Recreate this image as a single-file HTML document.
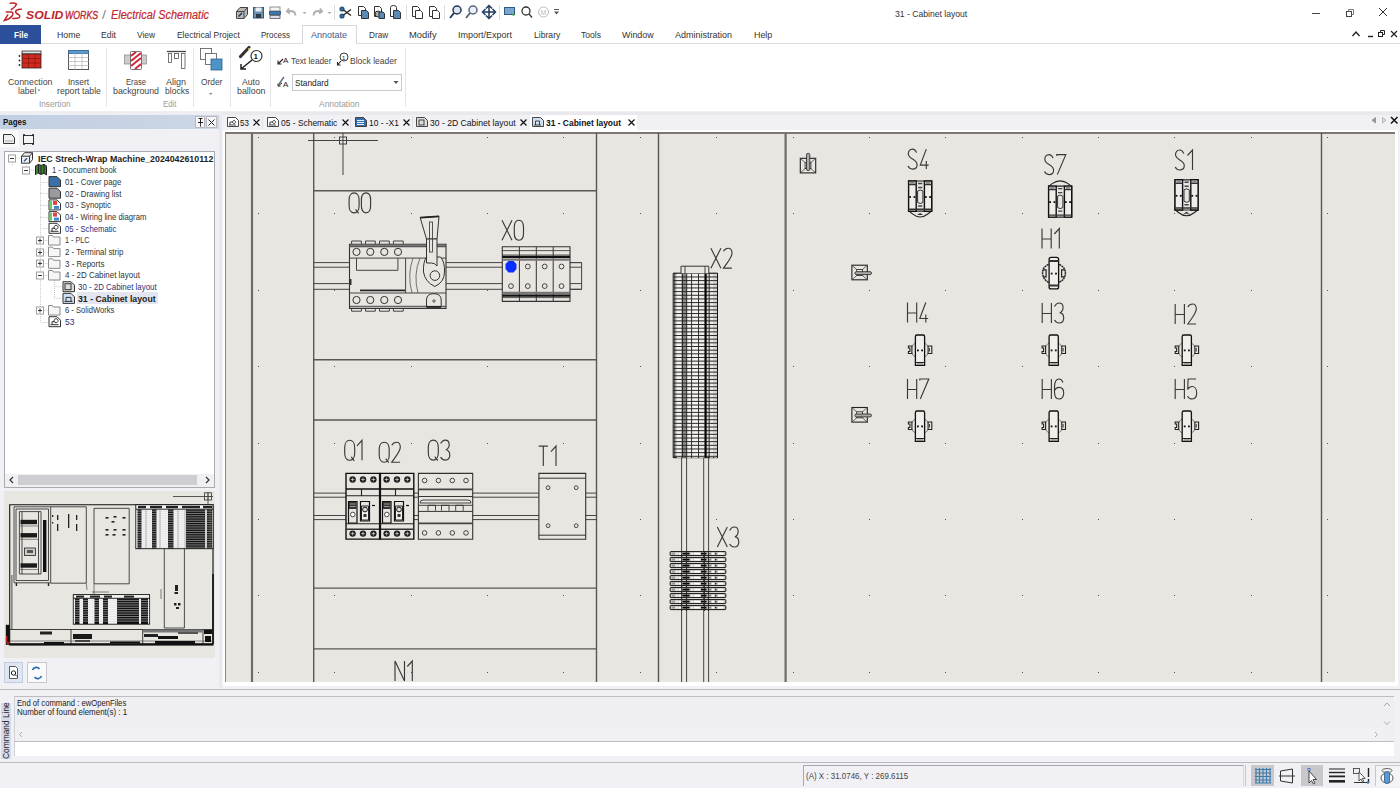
<!DOCTYPE html>
<html><head><meta charset="utf-8">
<style>
*{margin:0;padding:0;box-sizing:border-box}
html,body{width:1400px;height:788px;overflow:hidden;background:#f1f0f4;font-family:"Liberation Sans",sans-serif;color:#333;position:relative}
.a{position:absolute}
.t{position:absolute;white-space:nowrap;transform-origin:0 0}
svg{position:absolute;overflow:visible}
</style></head><body>

<div class="a" style="left:0px;top:0px;width:1400px;height:25px;background:#ffffff"></div>
<svg style="left:0;top:0" width="30" height="25" viewBox="0 0 30 25">
<g fill="none" stroke="#c1272d" stroke-width="1.5" stroke-linecap="round">
<path d="M10.3 3.3 Q14.5 2.6 16.5 4.2 Q15.5 7 11.3 9.5"/>
<path d="M6.2 12 H11.2 Q14 12.5 12.3 15.8 Q9.5 19.5 4.2 20.6 L7.8 14.8"/>
<path d="M21.3 9.3 Q16.5 9 15.7 11.3 Q15.3 13 18 14.2 Q20.8 15.8 19.2 17.6 Q17.5 18.6 12.8 18.5"/>
</g></svg>
<div class="t" style="left:26.10px;top:9.60px;font-size:11.2px;line-height:11.2px;color:#be262c;font-weight:bold;font-style:italic;transform:scaleX(1.0928);">SOLID</div>
<div class="t" style="left:64.50px;top:9.60px;font-size:11.2px;line-height:11.2px;color:#c1272d;font-weight:normal;font-style:italic;transform:scaleX(0.7846);-webkit-text-stroke:0.35px #c1272d;">WORKS</div>
<div class="t" style="left:102.00px;top:8.92px;font-size:12px;line-height:12px;color:#888;font-weight:normal;font-style:normal;transform:scaleX(1.1999);">/</div>
<div class="t" style="left:110.60px;top:8.92px;font-size:12px;line-height:12px;color:#c1272d;font-weight:normal;font-style:italic;transform:scaleX(0.9071);-webkit-text-stroke:0.2px #c1272d;">Electrical Schematic</div>
<div class="t" style="left:895.00px;top:9.65px;font-size:8.4px;line-height:8.4px;color:#333;font-weight:normal;font-style:normal;transform:scaleX(1.0268);">31 - Cabinet layout</div>
<svg style="left:0;top:0" width="1400" height="25">
<g stroke="#444" stroke-width="1" fill="none">
<line x1="1312" y1="13.5" x2="1320" y2="13.5"/>
<rect x="1346.5" y="11.5" width="5" height="5"/><path d="M1348.5 11.5 V9.5 H1353.5 V14.5 H1351.5" stroke="#777"/>
<path d="M1379 8 L1387 16 M1387 8 L1379 16" stroke="#333"/>
</g></svg>
<svg style="left:0;top:0" width="600" height="25">
<path d="M236.5 11.5 L240 7.5 H247.5 V14.5 L244 18.5 H236.5 Z" fill="#b8b8b8" stroke="#444" stroke-width="1"/>
<path d="M236.5 11.5 H244 V18.5 M244 11.5 L247.5 7.5" fill="none" stroke="#444" stroke-width="1"/>
<path d="M238.5 16.5 L242 13" stroke="#1e3a5a" stroke-width="1.6"/>
<rect x="253.5" y="7.5" width="10" height="10.5" fill="#6f8fae" stroke="#3d5670" stroke-width="1"/>
<rect x="255.5" y="7.5" width="6" height="4" fill="#e8eef4"/><rect x="256" y="14" width="5" height="4" fill="#2a3a4a"/>
<rect x="270" y="7" width="10" height="4" fill="#f4f4f4" stroke="#777" stroke-width="0.8"/>
<rect x="269.5" y="11.5" width="11" height="3" fill="#3a78b0" stroke="#2a4f80" stroke-width="0.8"/>
<rect x="270" y="15.5" width="10" height="3" fill="#dde" stroke="#555" stroke-width="0.8"/>
<g stroke="#b0b0b0" stroke-width="2" fill="none"><path d="M289 8.5 L287 11.5 L290 13.5 M287.8 11.5 Q295 9.5 295.5 15.5"/><path d="M320 8.5 L322 11.5 L319 13.5 M321.2 11.5 Q314 9.5 313.5 15.5"/></g>
<g fill="#aaa"><path d="M302.5 12 h4 l-2 2z"/><path d="M327.5 12 h4 l-2 2z"/></g>
<g stroke="#ddd"><line x1="334.5" y1="5" x2="334.5" y2="20"/><line x1="406.5" y1="5" x2="406.5" y2="20"/><line x1="444.5" y1="5" x2="444.5" y2="20"/><line x1="499.5" y1="5" x2="499.5" y2="20"/></g>
<g stroke="#2a5a85" stroke-width="1.6" fill="#3a6a95">
<circle cx="342" cy="9" r="1.8"/><circle cx="342" cy="16" r="1.8"/></g>
<path d="M343.5 10 L351 15.5 M343.5 15 L351 9.5" stroke="#222" stroke-width="1.3"/>
<g stroke="#333" stroke-width="1" fill="#fff">
<path d="M358.5 6.5 h5 l2 2 v7 h-7z"/><path d="M361.5 10.5 h5 l2 2 v6 h-7z" fill="#5a8ab5"/>
<path d="M374.5 6.5 h5 l2 2 v8 h-7z"/><circle cx="378" cy="14" r="3" fill="#aaa"/><path d="M379 12 h4 l1.5 1.5 v5 h-5.5z" fill="#5a8ab5"/>
<path d="M390.5 7.5 q0 -2 3 -2 q3 0 3 2 v9 h-6z"/><path d="M393.5 10.5 h5 l2 2 v6 h-7z" fill="#5a8ab5"/>
<path d="M412.5 6.5 h5 l2 2 v8 h-7z"/><path d="M415.5 10.5 h5 l2 2 v6 h-7z"/>
<path d="M429.5 6.5 h5 l2 2 v8 h-7z"/><path d="M432.5 10.5 h5 l2 2 v6 h-7z"/>
</g>
<g stroke="#1f3a5c" stroke-width="1.5" fill="none">
<circle cx="457" cy="10" r="4" fill="#dde6ee"/><path d="M454 13 L450 18" stroke-width="2"/>
<circle cx="473" cy="10" r="4" stroke="#567" fill="#eef"/><path d="M470 13 L466 18" stroke="#567" stroke-width="2"/>
<path d="M489 6 L489 18 M483 12 L495 12"/><path d="M486 8.5 L489 5.5 L492 8.5 M486 15.5 L489 18.5 L492 15.5 M485.5 9 L482.5 12 L485.5 15 M492.5 9 L495.5 12 L492.5 15"/>
</g>
<g stroke="#2c5a8a" stroke-width="1" fill="#7aa6cf"><rect x="504.5" y="7.5" width="10" height="7"/></g>
<path d="M511 13 l4 2 l-2 1z" fill="#3a3"/>
<g stroke="#333" stroke-width="1.3" fill="none"><circle cx="526" cy="11" r="4"/><path d="M529 14 L532 17.5"/></g>
<g stroke="#bbb" stroke-width="1" fill="none"><circle cx="543.5" cy="12" r="5"/></g>
<text x="540.5" y="14.5" font-size="7" fill="#bbb" font-family="Liberation Sans">M</text>
<g stroke="#555" fill="#555"><line x1="554" y1="9.5" x2="559" y2="9.5"/><path d="M554 11.5 h5 l-2.5 3z" stroke="none"/></g>
</svg>
<div class="a" style="left:0px;top:25px;width:1400px;height:19px;background:#ffffff"></div>
<div class="a" style="left:0px;top:43px;width:1400px;height:1px;background:#dadadf"></div>
<div class="a" style="left:0px;top:25px;width:41px;height:19px;background:#2c4f9c"></div>
<div class="t" style="left:13.50px;top:31.36px;font-size:9px;line-height:9px;color:#ffffff;font-weight:bold;font-style:normal;transform:scaleX(0.9030);">File</div>
<div class="a" style="left:302px;top:25px;width:55px;height:19px;background:#fff;border:1px solid #d6d6dc;border-bottom:none"></div>
<div class="a" style="left:303px;top:43px;width:53px;height:1px;background:#fff"></div>
<div class="t" style="left:56.60px;top:31.06px;font-size:9px;line-height:9px;color:#333;font-weight:normal;font-style:normal;transform:scaleX(0.9747);">Home</div>
<div class="t" style="left:101.00px;top:31.06px;font-size:9px;line-height:9px;color:#333;font-weight:normal;font-style:normal;transform:scaleX(0.9672);">Edit</div>
<div class="t" style="left:137.00px;top:31.06px;font-size:9px;line-height:9px;color:#333;font-weight:normal;font-style:normal;transform:scaleX(0.9304);">View</div>
<div class="t" style="left:176.60px;top:31.06px;font-size:9px;line-height:9px;color:#333;font-weight:normal;font-style:normal;transform:scaleX(0.9370);">Electrical Project</div>
<div class="t" style="left:261.00px;top:31.06px;font-size:9px;line-height:9px;color:#333;font-weight:normal;font-style:normal;transform:scaleX(0.8920);">Process</div>
<div class="t" style="left:311.00px;top:31.06px;font-size:9px;line-height:9px;color:#3d5a8c;font-weight:normal;font-style:normal;transform:scaleX(0.9991);">Annotate</div>
<div class="t" style="left:368.60px;top:31.06px;font-size:9px;line-height:9px;color:#333;font-weight:normal;font-style:normal;transform:scaleX(0.9094);">Draw</div>
<div class="t" style="left:409.00px;top:31.06px;font-size:9px;line-height:9px;color:#333;font-weight:normal;font-style:normal;transform:scaleX(1.0412);">Modify</div>
<div class="t" style="left:458.00px;top:31.06px;font-size:9px;line-height:9px;color:#333;font-weight:normal;font-style:normal;transform:scaleX(0.9996);">Import/Export</div>
<div class="t" style="left:533.70px;top:31.06px;font-size:9px;line-height:9px;color:#333;font-weight:normal;font-style:normal;transform:scaleX(0.9560);">Library</div>
<div class="t" style="left:581.00px;top:31.06px;font-size:9px;line-height:9px;color:#333;font-weight:normal;font-style:normal;transform:scaleX(0.9519);">Tools</div>
<div class="t" style="left:622.00px;top:31.06px;font-size:9px;line-height:9px;color:#333;font-weight:normal;font-style:normal;transform:scaleX(0.9903);">Window</div>
<div class="t" style="left:675.00px;top:31.06px;font-size:9px;line-height:9px;color:#333;font-weight:normal;font-style:normal;transform:scaleX(0.9996);">Administration</div>
<div class="t" style="left:753.70px;top:31.06px;font-size:9px;line-height:9px;color:#333;font-weight:normal;font-style:normal;transform:scaleX(0.9886);">Help</div>
<svg style="left:0;top:25" width="1400" height="19">
<g stroke="#222" fill="none" transform="translate(0 -25)">
<path d="M1352.5 36 L1356 32 L1359.5 36" stroke-width="1.4"/>
<line x1="1368" y1="36.5" x2="1373" y2="36.5" stroke-width="1.4"/>
<rect x="1378.5" y="32.5" width="4" height="4"/><path d="M1380.5 32.5 V30.5 H1384.5 V34.5 H1382.5"/>
<path d="M1391 31 L1397 37 M1397 31 L1391 37" stroke-width="1.2"/>
</g></svg>
<div class="a" style="left:0px;top:44px;width:1400px;height:67px;background:#ffffff"></div>
<div class="a" style="left:0px;top:111px;width:1400px;height:4px;background:#eeedf1"></div>
<div class="a" style="left:106px;top:48px;width:1px;height:59px;background:#e6e6ea"></div>
<div class="a" style="left:193px;top:48px;width:1px;height:59px;background:#e6e6ea"></div>
<div class="a" style="left:230px;top:48px;width:1px;height:59px;background:#e6e6ea"></div>
<div class="a" style="left:270px;top:48px;width:1px;height:59px;background:#e6e6ea"></div>
<div class="a" style="left:405px;top:48px;width:1px;height:59px;background:#e6e6ea"></div>
<div class="t" style="left:7.50px;top:77.87px;font-size:9.2px;line-height:9.2px;color:#444;font-weight:normal;font-style:normal;transform:scaleX(0.9561);">Connection</div>
<div class="t" style="left:17.60px;top:87.27px;font-size:9.2px;line-height:9.2px;color:#444;font-weight:normal;font-style:normal;transform:scaleX(0.9466);">label</div>
<div class="t" style="left:67.70px;top:77.87px;font-size:9.2px;line-height:9.2px;color:#444;font-weight:normal;font-style:normal;transform:scaleX(0.9170);">Insert</div>
<div class="t" style="left:56.70px;top:87.27px;font-size:9.2px;line-height:9.2px;color:#444;font-weight:normal;font-style:normal;transform:scaleX(0.9454);">report table</div>
<div class="t" style="left:39.40px;top:99.97px;font-size:9.2px;line-height:9.2px;color:#9a9a9a;font-weight:normal;font-style:normal;transform:scaleX(0.8955);">Insertion</div>
<div class="t" style="left:126.00px;top:77.87px;font-size:9.2px;line-height:9.2px;color:#444;font-weight:normal;font-style:normal;transform:scaleX(0.8321);">Erase</div>
<div class="t" style="left:112.80px;top:87.27px;font-size:9.2px;line-height:9.2px;color:#444;font-weight:normal;font-style:normal;transform:scaleX(0.9567);">background</div>
<div class="t" style="left:166.30px;top:77.87px;font-size:9.2px;line-height:9.2px;color:#444;font-weight:normal;font-style:normal;transform:scaleX(0.9825);">Align</div>
<div class="t" style="left:164.50px;top:87.27px;font-size:9.2px;line-height:9.2px;color:#444;font-weight:normal;font-style:normal;transform:scaleX(0.9280);">blocks</div>
<div class="t" style="left:163.00px;top:99.97px;font-size:9.2px;line-height:9.2px;color:#9a9a9a;font-weight:normal;font-style:normal;transform:scaleX(0.8389);">Edit</div>
<div class="t" style="left:200.60px;top:77.87px;font-size:9.2px;line-height:9.2px;color:#444;font-weight:normal;font-style:normal;transform:scaleX(0.9100);">Order</div>
<div class="t" style="left:242.30px;top:77.87px;font-size:9.2px;line-height:9.2px;color:#444;font-weight:normal;font-style:normal;transform:scaleX(0.9352);">Auto</div>
<div class="t" style="left:236.60px;top:87.27px;font-size:9.2px;line-height:9.2px;color:#444;font-weight:normal;font-style:normal;transform:scaleX(0.9605);">balloon</div>
<div class="t" style="left:290.90px;top:56.77px;font-size:9.2px;line-height:9.2px;color:#444;font-weight:normal;font-style:normal;transform:scaleX(0.8999);">Text leader</div>
<div class="t" style="left:350.30px;top:56.77px;font-size:9.2px;line-height:9.2px;color:#444;font-weight:normal;font-style:normal;transform:scaleX(0.9244);">Block leader</div>
<div class="t" style="left:319.40px;top:99.97px;font-size:9.2px;line-height:9.2px;color:#9a9a9a;font-weight:normal;font-style:normal;transform:scaleX(0.9229);">Annotation</div>
<div class="a" style="left:292px;top:74px;width:110px;height:17px;background:#fff;border:1px solid #c8c8cc"></div>
<div class="t" style="left:294.90px;top:78.57px;font-size:9.2px;line-height:9.2px;color:#222;font-weight:normal;font-style:normal;transform:scaleX(0.9025);">Standard</div>
<svg style="left:0;top:0" width="420" height="111">
<path d="M37.5 89.5 h3 l-1.5 1.8z" fill="#777"/>
<path d="M209 93 h3.5 l-1.75 2z" fill="#888"/>
<path d="M393.5 81 h5 l-2.5 3z" fill="#555"/>
<!-- connection label icon -->
<rect x="22" y="51" width="19" height="3" fill="#ddd" stroke="#333" stroke-width="0.8"/>
<rect x="22" y="54" width="19" height="14" fill="#d42a1e" stroke="#222" stroke-width="0.8"/>
<path d="M22 58.5 H41 M22 63 H41 M28.5 54 V68 M35 54 V68" stroke="#8a1a12" stroke-width="0.8"/>
<circle cx="19.5" cy="56" r="0.9" fill="#222"/><circle cx="19.5" cy="60.5" r="0.9" fill="#222"/><circle cx="19.5" cy="65" r="0.9" fill="#222"/>
<!-- insert report table -->
<rect x="68.5" y="50.5" width="20" height="19" fill="#fff" stroke="#555" stroke-width="1"/>
<rect x="68.5" y="50.5" width="20" height="3" fill="#5a9ccc" stroke="#3a6a9a" stroke-width="0.8"/>
<path d="M68.5 57.5 H88.5 M68.5 61.5 H88.5 M68.5 65.5 H88.5 M75 53.5 V69.5 M82 53.5 V69.5" stroke="#bbb" stroke-width="0.8"/>
<!-- erase background -->
<rect x="124.5" y="55" width="22" height="9" fill="#ccc" stroke="#777" stroke-width="0.6"/>
<rect x="130.5" y="51.5" width="11" height="18" fill="#fff" stroke="#555" stroke-width="0.8" rx="1"/>
<path d="M131 56 L136 52 M131 61 L141 53 M131 66 L141 58 M135 69 L141 64" stroke="#d0263a" stroke-width="2"/>
<!-- align blocks -->
<path d="M167 51.5 H186" stroke="#444" stroke-width="1.3"/>
<rect x="168.5" y="53.5" width="3" height="9" fill="#fff" stroke="#555" stroke-width="0.8"/>
<rect x="174.5" y="53.5" width="4" height="5" fill="#fff" stroke="#555" stroke-width="0.8"/>
<rect x="181.5" y="53.5" width="3.5" height="15" fill="#fff" stroke="#555" stroke-width="0.8"/>
<!-- order -->
<rect x="200.5" y="48.5" width="11" height="11" fill="#fff" stroke="#555" stroke-width="0.8"/>
<rect x="205.5" y="53.5" width="11" height="11" fill="#fff" stroke="#555" stroke-width="0.8"/>
<rect x="211" y="59" width="11" height="11" fill="#4c94c8" stroke="#2b5f8a" stroke-width="0.8"/>
<!-- auto balloon -->
<circle cx="256.5" cy="56" r="5.5" fill="#fff" stroke="#333" stroke-width="1.2"/>
<text x="253.5" y="59" font-size="8" font-weight="bold" fill="#222" font-family="Liberation Sans">1</text>
<path d="M249 47.5 L240.5 56.5" stroke="#333" stroke-width="3.2" stroke-linecap="round"/>
<path d="M252 60 L241 69 M241 64 V69 H246" stroke="#222" stroke-width="1.5" fill="none"/>
<circle cx="249" cy="49" r="1" fill="#dd3"/>
<!-- text leader -->
<path d="M283 59 L278 64 M278 60.5 V64 H281.5" stroke="#222" stroke-width="1.1" fill="none"/>
<text x="283" y="63" font-size="8" fill="#222" font-family="Liberation Sans">A</text>
<circle cx="344" cy="57" r="4" fill="#fff" stroke="#222" stroke-width="0.9"/>
<text x="342" y="59.5" font-size="6" fill="#222" font-family="Liberation Sans">1</text>
<path d="M341 61 L337.5 65 M337.5 62 V65 H340.5" stroke="#222" stroke-width="1.1" fill="none"/>
<path d="M284 77 L279 84" stroke="#5a6e8c" stroke-width="1.4"/>
<path d="M282 83 L278 86 M278 83.5 V86 H280.5" stroke="#222" stroke-width="1" fill="none"/>
<text x="283" y="87" font-size="8" fill="#222" font-family="Liberation Sans">A</text>
</svg>
<div class="a" style="left:0px;top:115px;width:222px;height:573px;background:#f1f0f4"></div>
<div class="a" style="left:0px;top:115px;width:221px;height:14px;background:linear-gradient(90deg,#c3d0e2 0%,#c8d4e4 70%,#cdd7e6 100%)"></div>
<div class="t" style="left:2.90px;top:117.56px;font-size:9px;line-height:9px;color:#111;font-weight:bold;font-style:normal;transform:scaleX(0.8787);">Pages</div>
<div class="a" style="left:195px;top:116px;width:10px;height:12px;background:#f6f6f8;border:1px solid #b8b8c0"></div>
<div class="a" style="left:206px;top:116px;width:11px;height:12px;background:#f6f6f8;border:1px solid #b8b8c0"></div>
<svg style="left:0;top:0" width="222" height="700">
<g stroke="#222" stroke-width="1" fill="none">
<path d="M198.5 118.5 h4 M200.5 118.5 v6 M198 122.5 h5 M200.5 124.5 v2"/>
<path d="M208.5 119.5 l6 6 M214.5 119.5 l-6 6"/>
</g>
<!-- icons row -->
<rect x="0" y="131" width="19" height="16" fill="#fbfbfc"/>
<path d="M3.5 134.5 h8 l3 3 v6 h-11z" fill="#eee" stroke="#333" stroke-width="1"/>
<rect x="5" y="140" width="8" height="2" fill="#ccc"/>
<rect x="23.5" y="135.5" width="10" height="8" fill="#f4f4f4" stroke="#333" stroke-width="1"/>
<circle cx="24" cy="135" r="1" fill="#222"/><circle cx="33" cy="135" r="1" fill="#222"/><circle cx="24" cy="144" r="1" fill="#222"/><circle cx="33" cy="144" r="1" fill="#222"/>
</svg>
<div class="a" style="left:4px;top:151px;width:211px;height:337px;background:#ffffff;border:1px solid #a9a9b0"></div>
<div class="a" style="left:5px;top:474px;width:209px;height:13px;background:#f0f0f3"></div>
<div class="a" style="left:18px;top:475px;width:179px;height:10px;background:#cdcdd2"></div>
<svg style="left:0;top:0" width="222" height="700">
<path d="M13 477 l-3 3 l3 3" stroke="#333" stroke-width="1.2" fill="none"/>
<path d="M206 477 l3 3 l-3 3" stroke="#333" stroke-width="1.2" fill="none"/>
</svg>
<div class="a" style="left:76.5px;top:292.36px;width:81.5px;height:12px;background:#e3e6f0"></div>
<div class="t" style="left:37.50px;top:154.65px;font-size:8.6px;line-height:8.6px;color:#222;font-weight:bold;font-style:normal;transform:scaleX(1.0264);">IEC Strech-Wrap Machine_2024042610112</div>
<div class="t" style="left:51.50px;top:166.33px;font-size:8.6px;line-height:8.6px;color:#333;font-weight:normal;font-style:normal;transform:scaleX(0.8877);">1 - Document book</div>
<div class="t" style="left:64.60px;top:178.01px;font-size:8.6px;line-height:8.6px;color:#333;font-weight:normal;font-style:normal;transform:scaleX(0.9145);">01 - Cover page</div>
<div class="t" style="left:64.60px;top:189.69px;font-size:8.6px;line-height:8.6px;color:#333;font-weight:normal;font-style:normal;transform:scaleX(0.9148);">02 - Drawing list</div>
<div class="t" style="left:64.60px;top:201.37px;font-size:8.6px;line-height:8.6px;color:#333;font-weight:normal;font-style:normal;transform:scaleX(0.9144);">03 - Synoptic</div>
<div class="t" style="left:64.60px;top:213.05px;font-size:8.6px;line-height:8.6px;color:#333;font-weight:normal;font-style:normal;transform:scaleX(0.8963);">04 - Wiring line diagram</div>
<div class="t" style="left:64.60px;top:224.73px;font-size:8.6px;line-height:8.6px;color:#27307a;font-weight:normal;font-style:normal;transform:scaleX(0.8961);">05 - Schematic</div>
<div class="t" style="left:64.60px;top:236.41px;font-size:8.6px;line-height:8.6px;color:#333;font-weight:normal;font-style:normal;transform:scaleX(0.8369);">1 - PLC</div>
<div class="t" style="left:64.60px;top:248.09px;font-size:8.6px;line-height:8.6px;color:#333;font-weight:normal;font-style:normal;transform:scaleX(0.9210);">2 - Terminal strip</div>
<div class="t" style="left:64.60px;top:259.77px;font-size:8.6px;line-height:8.6px;color:#333;font-weight:normal;font-style:normal;transform:scaleX(0.9262);">3 - Reports</div>
<div class="t" style="left:64.60px;top:271.45px;font-size:8.6px;line-height:8.6px;color:#333;font-weight:normal;font-style:normal;transform:scaleX(0.9271);">4 - 2D Cabinet layout</div>
<div class="t" style="left:78.30px;top:283.13px;font-size:8.6px;line-height:8.6px;color:#27307a;font-weight:normal;font-style:normal;transform:scaleX(0.9197);">30 - 2D Cabinet layout</div>
<div class="t" style="left:78.30px;top:294.81px;font-size:8.6px;line-height:8.6px;color:#222;font-weight:bold;font-style:normal;transform:scaleX(1.0162);">31 - Cabinet layout</div>
<div class="t" style="left:64.60px;top:306.49px;font-size:8.6px;line-height:8.6px;color:#333;font-weight:normal;font-style:normal;transform:scaleX(0.8860);">6 - SolidWorks</div>
<div class="t" style="left:64.60px;top:318.17px;font-size:8.6px;line-height:8.6px;color:#27307a;font-weight:normal;font-style:normal;transform:scaleX(0.9826);">53</div>
<svg style="left:0;top:0" width="222" height="700"><g stroke="#c8c8c8" stroke-width="1" stroke-dasharray="1 1" fill="none"><path d="M12.5 162.2 V166.2 M26.5 165.9 V166.9"/><path d="M40.5 175.9 V321.7"/><path d="M40.5 182.5 H48"/><path d="M40.5 193.5 H48"/><path d="M40.5 205.5 H48"/><path d="M40.5 217.5 H48"/><path d="M40.5 228.5 H48"/><path d="M40.5 240.5 H48"/><path d="M40.5 252.5 H48"/><path d="M40.5 263.5 H48"/><path d="M40.5 275.5 H48"/><path d="M40.5 310.5 H48"/><path d="M40.5 322.5 H48"/><path d="M54.5 280.0 V298.4 M54.5 286.7 H62 M54.5 298.4 H62"/><path d="M15 158.2 H21 M29 169.9 H35"/></g><rect x="8.5" y="155.0" width="7" height="7" fill="#fff" stroke="#a0a0a0" stroke-width="1"/><path d="M10 158.5 h4" stroke="#333" stroke-width="1"/><rect x="22.5" y="167.0" width="7" height="7" fill="#fff" stroke="#a0a0a0" stroke-width="1"/><path d="M24 170.5 h4" stroke="#333" stroke-width="1"/><rect x="36.5" y="237.0" width="7" height="7" fill="#fff" stroke="#a0a0a0" stroke-width="1"/><path d="M38 240.5 h4" stroke="#333" stroke-width="1"/><path d="M40 238.5 v4" stroke="#333" stroke-width="1"/><rect x="36.5" y="249.0" width="7" height="7" fill="#fff" stroke="#a0a0a0" stroke-width="1"/><path d="M38 252.5 h4" stroke="#333" stroke-width="1"/><path d="M40 250.5 v4" stroke="#333" stroke-width="1"/><rect x="36.5" y="260.0" width="7" height="7" fill="#fff" stroke="#a0a0a0" stroke-width="1"/><path d="M38 263.5 h4" stroke="#333" stroke-width="1"/><path d="M40 261.5 v4" stroke="#333" stroke-width="1"/><rect x="36.5" y="307.0" width="7" height="7" fill="#fff" stroke="#a0a0a0" stroke-width="1"/><path d="M38 310.5 h4" stroke="#333" stroke-width="1"/><path d="M40 308.5 v4" stroke="#333" stroke-width="1"/><rect x="36.5" y="272.0" width="7" height="7" fill="#fff" stroke="#a0a0a0" stroke-width="1"/><path d="M38 275.5 h4" stroke="#333" stroke-width="1"/><path d="M21.5 156.2 l3 -3.5 h8 v7 l-3 3.5 h-8z M21.5 156.2 h8 v7 M29.5 156.2 l3 -3.5" fill="#eee" stroke="#333" stroke-width="1"/><path d="M24 161.2 l3 -3" stroke="#2a5a9a" stroke-width="1.5"/><path d="M35.5 174.9 v-9 l3 -1.5 v9 M38.5 173.4 l2.5 1 v-9 l-2.5 -1 M41 165.4 l3 -1 v9 l-3 1 M44 164.4 l2.5 1.5 v9 l-2.5 -1.5" fill="#3f7f3a" stroke="#222" stroke-width="1"/><path d="M49.0 176.6 h8 l3.5 3.5 v6.5 h-11.5z" fill="#3b6fa8" stroke="#333" stroke-width="1"/><path d="M49.0 188.2 h8 l3.5 3.5 v6.5 h-11.5z" fill="#9a9aa0" stroke="#333" stroke-width="1"/><path d="M49.0 199.9 h8 l3.5 3.5 v6.5 h-11.5z" fill="#fff" stroke="#333" stroke-width="1"/><rect x="50" y="200.9" width="2" height="8" fill="#6c6"/><rect x="53" y="200.9" width="4" height="4" fill="#d44"/><rect x="54" y="205.9" width="5" height="3" fill="#48c"/><path d="M49.0 211.6 h8 l3.5 3.5 v6.5 h-11.5z" fill="#fff" stroke="#333" stroke-width="1"/><rect x="50" y="212.6" width="2" height="8" fill="#6c6"/><rect x="53" y="212.6" width="4" height="4" fill="#d44"/><rect x="54" y="217.6" width="5" height="3" fill="#48c"/><path d="M49.0 223.3 h8 l3.5 3.5 v6.5 h-11.5z" fill="#fff" stroke="#333" stroke-width="1"/><path d="M50.5 231.3 h8 M52 231.3 v-3 h3 M56 229.3 a2 2 0 1 1 0.1 0" stroke="#333" fill="none"/><path d="M49.0 316.7 h8 l3.5 3.5 v6.5 h-11.5z" fill="#fff" stroke="#333" stroke-width="1"/><path d="M50.5 324.7 h8 M52 324.7 v-3 h3 M56 322.7 a2 2 0 1 1 0.1 0" stroke="#333" fill="none"/><path d="M48.5 235.5 h4 l1 1.5 h6.5 v8 h-11.5z" fill="#f6f6f6" stroke="#8a8a8a" stroke-width="1"/><path d="M48.5 247.1 h4 l1 1.5 h6.5 v8 h-11.5z" fill="#f6f6f6" stroke="#8a8a8a" stroke-width="1"/><path d="M48.5 258.8 h4 l1 1.5 h6.5 v8 h-11.5z" fill="#f6f6f6" stroke="#8a8a8a" stroke-width="1"/><path d="M48.5 270.5 h4 l1 1.5 h6.5 v8 h-11.5z" fill="#f6f6f6" stroke="#8a8a8a" stroke-width="1"/><path d="M48.5 305.5 h4 l1 1.5 h6.5 v8 h-11.5z" fill="#f6f6f6" stroke="#8a8a8a" stroke-width="1"/><path d="M63.0 281.7 h8 l3.5 3.5 v6.5 h-11.5z" fill="#ddd" stroke="#333" stroke-width="1"/><rect x="65" y="283.7" width="6" height="6" fill="none" stroke="#333"/><path d="M63.0 293.4 h8 l3.5 3.5 v6.5 h-11.5z" fill="#cfe0f0" stroke="#333" stroke-width="1"/><path d="M64.5 301.4 h8 M66 301.4 v-4 h5 v4" stroke="#333" fill="none"/></svg>
<div class="a" style="left:4px;top:491px;width:211px;height:167px;background:#e8e6e1"></div>
<svg style="left:0;top:0" width="222" height="700"><path d="M173 496.5 H213 M208 492 V548" stroke="#333" stroke-width="0.8" fill="none"/><rect x="204.5" y="492.8" width="7" height="7.2" fill="none" stroke="#444" stroke-width="0.9"/><path d="M208 493 V500 M204.5 496.5 H211.5" stroke="#444" stroke-width="0.7" fill="none"/><path d="M9.7 504.7 H213 V645 H9.7 Z" stroke="#111" stroke-width="1.1" fill="none"/><path d="M11.9 575 V629" stroke="#222" stroke-width="0.8" fill="none"/><path d="M213 574 V644" stroke="#111" stroke-width="1.6" fill="none"/><rect x="5.8" y="624.8" width="3.9" height="20" fill="#111"/><path d="M7 636 Q5.5 640 7.5 643.5 L9.5 642" stroke="#d02020" stroke-width="1.2" fill="none"/><path d="M14 506.8 H50.7 V582.8 H14 Z M16 509 H48.5 V580.5 H16 Z" stroke="#222" stroke-width="0.8" fill="none"/><path d="M19.4 511.6 V574 M22 511.6 V574 M38.5 511.6 V574 M41 511.6 V574 M19.4 511.6 H41 M19.4 574 H41" stroke="#222" stroke-width="0.8" fill="none"/><rect x="20.5" y="519.8" width="16.5" height="4.4" fill="#1a1a1a"/><path d="M20 526 H38" stroke="#444" stroke-width="0.6" fill="none"/><rect x="20.5" y="533.0999999999999" width="16.5" height="4.4" fill="#1a1a1a"/><path d="M20 539.3 H38" stroke="#444" stroke-width="0.6" fill="none"/><rect x="20.5" y="563.3" width="16.5" height="4.4" fill="#1a1a1a"/><path d="M20 569.5 H38" stroke="#444" stroke-width="0.6" fill="none"/><rect x="24.5" y="548" width="11" height="7.5" fill="#ccc" stroke="#222" stroke-width="0.8"/><rect x="27" y="550" width="6" height="3" fill="#555"/><rect x="43" y="520" width="3.4" height="52" fill="#111"/><path d="M16.4 583 V586 M48.5 583 V586" stroke="#222" stroke-width="1.4" fill="none"/><path d="M50.7 506.8 H86.3 V583.2 H50.7" stroke="#222" stroke-width="0.8" fill="none"/><rect x="52" y="515" width="1.3" height="2" fill="#222"/><rect x="52" y="522" width="1.3" height="1.5" fill="#222"/><rect x="57" y="515" width="1.3" height="5" fill="#222"/><rect x="57" y="524" width="1.3" height="7" fill="#222"/><rect x="68" y="514" width="1.3" height="14" fill="#222"/><rect x="76" y="515" width="1.3" height="5" fill="#222"/><rect x="76" y="524" width="1.3" height="7" fill="#222"/><path d="M94 508.3 H129.2 V583.8 H94 Z" stroke="#222" stroke-width="0.8" fill="none"/><rect x="105.5" y="517" width="3" height="1.6" fill="#222"/><rect x="113.5" y="516" width="3" height="1.6" fill="#222"/><rect x="122.5" y="517" width="3" height="1.6" fill="#222"/><rect x="111.5" y="521" width="3" height="1.6" fill="#222"/><rect x="105.5" y="529" width="3" height="1.6" fill="#222"/><rect x="113.5" y="529" width="3" height="1.6" fill="#222"/><rect x="122.5" y="529" width="3" height="1.6" fill="#222"/><rect x="105.5" y="534" width="3" height="1.6" fill="#222"/><rect x="122.5" y="534" width="3" height="1.6" fill="#222"/><rect x="112.5" y="534" width="3" height="1.6" fill="#222"/><path d="M86.3 583.5 L87 590 M94 583.8 V596" stroke="#333" stroke-width="0.6" fill="none"/><rect x="135.8" y="504.7" width="77.2" height="44" fill="#f4f4f4" stroke="#111" stroke-width="0.9"/><rect x="137.5" y="509.5" width="4.0" height="39" fill="#111"/><rect x="152" y="509.5" width="4.5" height="39" fill="#111"/><rect x="168" y="509.5" width="5.5" height="39" fill="#111"/><rect x="186" y="509.5" width="19" height="39" fill="#111"/><rect x="207" y="509.5" width="5" height="39" fill="#111"/><rect x="138" y="505.8" width="8" height="2.4" fill="#222"/><rect x="150" y="505.8" width="12" height="2.4" fill="#222"/><rect x="166" y="505.8" width="12" height="2.4" fill="#222"/><rect x="182" y="505.8" width="18" height="2.4" fill="#222"/><rect x="203" y="505.8" width="9" height="2.4" fill="#222"/><path d="M136 509.2 H213" stroke="#111" stroke-width="0.9" fill="none"/><path d="M136 511.20 H213 M136 513.45 H213 M136 515.70 H213 M136 517.95 H213 M136 520.20 H213 M136 522.45 H213 M136 524.70 H213 M136 526.95 H213 M136 529.20 H213 M136 531.45 H213 M136 533.70 H213 M136 535.95 H213 M136 538.20 H213 M136 540.45 H213 M136 542.70 H213 M136 544.95 H213 M136 547.20 H213 " stroke="#d8d8d8" stroke-width="0.55" fill="none"/><path d="M146 509.5 V548.5" stroke="#777" stroke-width="0.5" fill="none"/><path d="M160 509.5 V548.5" stroke="#777" stroke-width="0.5" fill="none"/><path d="M178 509.5 V548.5" stroke="#777" stroke-width="0.5" fill="none"/><path d="M185 509.5 V548.5" stroke="#777" stroke-width="0.5" fill="none"/><path d="M206 509.5 V548.5" stroke="#777" stroke-width="0.5" fill="none"/><path d="M210 509.5 V548.5" stroke="#777" stroke-width="0.5" fill="none"/><path d="M164.3 548.7 V628 M184.4 548.7 V628 M164.3 628 H184.4" stroke="#222" stroke-width="0.8" fill="none"/><rect x="175" y="585" width="3" height="6" fill="#222"/><rect x="174.5" y="592" width="3.5" height="2" fill="#222"/><rect x="174" y="603" width="2.5" height="2.5" fill="#222"/><rect x="178" y="603" width="2.5" height="2.5" fill="#222"/><rect x="176" y="607" width="3" height="2" fill="#222"/><path d="M161 589 V599" stroke="#333" stroke-width="0.6" fill="none"/><rect x="73.3" y="594.6" width="76.3" height="29.6" fill="#f4f4f4" stroke="#111" stroke-width="0.9"/><rect x="75" y="598.5" width="4.5" height="25.5" fill="#111"/><rect x="83" y="598.5" width="5" height="25.5" fill="#111"/><rect x="94.5" y="598.5" width="4.5" height="25.5" fill="#111"/><rect x="103" y="598.5" width="5" height="25.5" fill="#111"/><rect x="117" y="598.5" width="22" height="25.5" fill="#111"/><rect x="141" y="598.5" width="7" height="25.5" fill="#111"/><rect x="76" y="595.6" width="8" height="2" fill="#222"/><rect x="90" y="595.6" width="10" height="2" fill="#222"/><rect x="104" y="595.6" width="8" height="2" fill="#222"/><rect x="124" y="595.6" width="10" height="2" fill="#222"/><path d="M73.5 598.3 H149.6" stroke="#111" stroke-width="0.9" fill="none"/><path d="M73.5 600.40 H149.6 M73.5 602.70 H149.6 M73.5 605.00 H149.6 M73.5 607.30 H149.6 M73.5 609.60 H149.6 M73.5 611.90 H149.6 M73.5 614.20 H149.6 M73.5 616.50 H149.6 M73.5 618.80 H149.6 M73.5 621.10 H149.6 " stroke="#d8d8d8" stroke-width="0.55" fill="none"/><path d="M92 592 H109" stroke="#333" stroke-width="0.6" fill="none"/><path d="M9.7 629.5 H213 M71 629.5 V645 M142.7 629.5 V645 M203 629.5 V645" stroke="#111" stroke-width="0.8" fill="none"/><path d="M9.7 641 H213" stroke="#555" stroke-width="0.7" fill="none"/><rect x="40" y="631.5" width="12" height="3" fill="#222"/><rect x="73" y="634" width="19" height="5" fill="#1a1a1a"/><rect x="75" y="640" width="15" height="2" fill="#444"/><rect x="142.7" y="629.5" width="60" height="3" fill="#777"/><rect x="144" y="634" width="14" height="3" fill="#222"/><rect x="158" y="636" width="20" height="3" fill="#111"/><rect x="178" y="632" width="20" height="2" fill="#555"/><rect x="204" y="630" width="8" height="4" fill="#111"/><rect x="205" y="636" width="6" height="6" fill="#111"/><rect x="10" y="643.2" width="203" height="2" fill="#111"/><rect x="44" y="642" width="20" height="2" fill="#111"/><rect x="110" y="641.5" width="30" height="2" fill="#111"/><rect x="155" y="641" width="40" height="3" fill="#111"/></svg>
<div class="a" style="left:4px;top:662px;width:19px;height:21px;background:#dfe6f3;border:1px solid #c3cde0"></div>
<div class="a" style="left:27px;top:662px;width:20px;height:21px;background:#fafafa;border:1px solid #c8c8cc"></div>
<svg style="left:0;top:0" width="222" height="700">
<path d="M9.5 666.5 h6 l2 2 v10 h-8z" fill="#fff" stroke="#333" stroke-width="0.8"/>
<circle cx="13.5" cy="673" r="2.2" fill="none" stroke="#222" stroke-width="1"/><path d="M15 674.5 l2 2" stroke="#222"/>
<path d="M32.5 670 a4 4 0 0 1 7 -1 M41.5 676 a4 4 0 0 1 -7 1" stroke="#2a6ab0" stroke-width="1.6" fill="none"/>
</svg>
<div class="a" style="left:219px;top:115px;width:3px;height:573px;background:#e9e8ec"></div>
<div class="a" style="left:0px;top:688px;width:1400px;height:74px;background:#f1f0f4"></div>
<div class="a" style="left:0px;top:689px;width:1400px;height:1px;background:#b9b9be"></div>
<div class="a" style="left:1px;top:703px;width:10px;height:56px;background:#d5dbe8"></div>
<div class="t" style="left:1.5px;top:759px;font-size:9px;line-height:9px;color:#222;transform-origin:0 0;transform:rotate(-90deg) scaleX(0.93)">Command Line</div>
<div class="a" style="left:14px;top:696px;width:1380px;height:46px;background:#efeef2;border-top:1px solid #bdbdc2;border-left:1px solid #cfcfd4"></div>
<div class="a" style="left:15px;top:728px;width:1367px;height:13px;background:#f1f0f4"></div>
<div class="a" style="left:14px;top:741px;width:1380px;height:1px;background:#bdbdc2"></div>
<div class="a" style="left:14px;top:742px;width:1380px;height:14px;background:#ffffff;border-left:1px solid #cfcfd4"></div>
<div class="t" style="left:17.00px;top:699.65px;font-size:8.2px;line-height:8.2px;color:#222;font-weight:normal;font-style:normal;transform:scaleX(0.9376);">End of command : ewOpenFiles</div>
<div class="t" style="left:17.00px;top:708.95px;font-size:8.2px;line-height:8.2px;color:#222;font-weight:normal;font-style:normal;transform:scaleX(0.9719);">Number of found element(s) : 1</div>
<svg style="left:0;top:680" width="1400" height="110">
<path d="M22 52 l-2.5 2.5 l2.5 2.5" stroke="#aaa" stroke-width="1" fill="none"/>
<path d="M1375 52 l2.5 2.5 l-2.5 2.5" stroke="#aaa" stroke-width="1" fill="none"/>
<path d="M1384 26 l3 -3 l3 3" stroke="#aaa" stroke-width="1" fill="none"/>
<path d="M1384 41.5 l3 3 l3 -3" stroke="#aaa" stroke-width="1" fill="none"/>
</svg>
<div class="a" style="left:0px;top:762px;width:1400px;height:26px;background:#f1f0f4"></div>
<div class="a" style="left:0px;top:762px;width:1400px;height:1px;background:#b9b9be"></div>
<div class="a" style="left:803px;top:765px;width:441px;height:21px;background:#f1f0f4;border-left:1px solid #a8a8ae;border-top:1px solid #a8a8ae;border-right:1px solid #d8d8dc"></div>
<div class="t" style="left:806.20px;top:771.85px;font-size:8.6px;line-height:8.6px;color:#444;font-weight:normal;font-style:normal;transform:scaleX(0.9262);">(A) X : 31.0746, Y : 269.6115</div>
<div class="a" style="left:1245px;top:765px;width:1px;height:21px;background:#c6c6cb"></div>
<div class="a" style="left:1251px;top:765px;width:23px;height:21px;background:#c8c8cc"></div>
<div class="a" style="left:1301px;top:765px;width:22px;height:21px;background:#c8c8cc"></div>
<div class="a" style="left:1375px;top:765px;width:25px;height:21px;background:#f4f4f6;border-left:1px solid #c6c6cb;border-top:1px solid #c6c6cb"></div>
<svg style="left:0;top:0" width="1400" height="788">
<g stroke="#3a7cae" stroke-width="1.1">
<path d="M1256 768 V783 M1259.5 768 V783 M1263 768 V783 M1266.5 768 V783 M1270 768 V783"/>
<path d="M1255 769.5 H1271 M1255 773 H1271 M1255 776.5 H1271 M1255 780 H1271 M1255 783 H1271"/>
</g>
<path d="M1280.5 771 L1292.5 769 V783 L1280.5 781 Z M1279 776 H1295" stroke="#333" stroke-width="1" fill="none"/>
<rect x="1308" y="768.5" width="2" height="2" fill="#fff" stroke="#36a" stroke-width="0.8"/>
<path d="M1309 771 V783 l2.5 -2.5 l2 3.5 l1.5 -1 l-2 -3.5 h3.5 Z" fill="#fff" stroke="#333" stroke-width="0.9"/>
<rect x="1329" y="768.5" width="16" height="1" fill="#222"/>
<rect x="1329" y="771.8" width="16" height="1.4" fill="#222"/>
<rect x="1329" y="775.5" width="16" height="1.8" fill="#222"/>
<rect x="1329" y="780" width="16" height="2.6" fill="#222"/>
<rect x="1353.5" y="768.5" width="6" height="5" fill="#eee" stroke="#333" stroke-width="0.8"/>
<path d="M1359 772 V781 l2 -2 l1.5 3 l1.2 -0.8 l-1.5 -2.8 h3 Z" fill="#fff" stroke="#333" stroke-width="0.8"/>
<path d="M1368.5 768 V777 M1368.5 779 V783" stroke="#222" stroke-width="1.4"/>
<path d="M1354 782.5 H1367" stroke="#333" stroke-width="1"/><circle cx="1368" cy="782.5" r="1.3" fill="#3a7cae"/>
<ellipse cx="1387" cy="770.5" rx="5" ry="2" fill="none" stroke="#555" stroke-width="0.9"/>
<ellipse cx="1387" cy="778" rx="6" ry="5" fill="#fff" stroke="#444" stroke-width="0.9"/>
<rect x="1384.5" y="771.5" width="5" height="12" rx="2.4" fill="#5a9ad0" stroke="#2a5a8a" stroke-width="0.8"/>
</svg>
<div class="a" style="left:222px;top:112px;width:1178px;height:3px;background:#e9e8ec"></div>
<div class="a" style="left:222px;top:115px;width:1178px;height:15px;background:#f1f0f4"></div>
<div class="t" style="left:240.40px;top:118.76px;font-size:8.8px;line-height:8.8px;color:#111;font-weight:normal;font-style:normal;transform:scaleX(0.8990);">53</div>
<div class="t" style="left:280.70px;top:118.76px;font-size:8.8px;line-height:8.8px;color:#111;font-weight:normal;font-style:normal;transform:scaleX(0.9592);">05 - Schematic</div>
<div class="t" style="left:368.70px;top:118.76px;font-size:8.8px;line-height:8.8px;color:#111;font-weight:normal;font-style:normal;transform:scaleX(0.9552);">10 - -X1</div>
<div class="t" style="left:430.00px;top:118.76px;font-size:8.8px;line-height:8.8px;color:#111;font-weight:normal;font-style:normal;transform:scaleX(0.9776);">30 - 2D Cabinet layout</div>
<div class="a" style="left:530px;top:115px;width:107px;height:15px;background:#ffffff"></div>
<div class="t" style="left:546.00px;top:118.76px;font-size:8.8px;line-height:8.8px;color:#111;font-weight:bold;font-style:normal;transform:scaleX(0.9586);">31 - Cabinet layout</div>
<svg style="left:0;top:0" width="1400" height="140">
<g stroke="#111" stroke-width="1.2" fill="none">
<path d="M253.5 119.5 l6 6 M259.5 119.5 l-6 6"/>
<path d="M342.5 119.5 l6 6 M348.5 119.5 l-6 6"/>
<path d="M403.5 119.5 l6 6 M409.5 119.5 l-6 6"/>
<path d="M520.5 119.5 l6 6 M526.5 119.5 l-6 6"/>
<path d="M628.5 119.5 l6 6 M634.5 119.5 l-6 6"/>
</g>
<g stroke="#e0e0e4" stroke-width="1"><path d="M262.5 116 V129 M350.5 116 V129 M412.5 116 V129"/></g>
<g stroke="#333" stroke-width="0.9" fill="#fff">
<path d="M227.5 117.5 h8 l3 3 v6 h-11z"/><path d="M229 125 h7 M230 125 v-3 h3 M234 123.5 a1.5 1.5 0 1 1 0.1 0" fill="none"/>
<path d="M267.5 117.5 h8 l3 3 v6 h-11z"/><path d="M269 125 h7 M270 125 v-3 h3 M274 123.5 a1.5 1.5 0 1 1 0.1 0" fill="none"/>
<path d="M355.5 117.5 h8 l3 3 v6 h-11z" fill="#3b6fa8"/><path d="M357 120.5 h7 M357 122.5 h7 M357 124.5 h7" stroke="#fff" fill="none"/>
<path d="M416.5 117.5 h8 l3 3 v6 h-11z" fill="#ddd"/><rect x="419" y="120" width="5" height="5" fill="none"/>
<path d="M532.5 117.5 h8 l3 3 v6 h-11z" fill="#cfe0f0"/><path d="M534 125 h7 M535.5 125 v-4 h4 v4" fill="none"/>
</g>
<path d="M1375.5 117.5 v5.5 l-3.5 -2.75z" fill="#999" stroke="#777" stroke-width="0.6"/>
<path d="M1382.5 117.5 v5.5 l3.5 -2.75z" fill="#ddd" stroke="#999" stroke-width="0.6"/>
<path d="M1391 117 l6.5 6.5 M1397.5 117 l-6.5 6.5" stroke="#111" stroke-width="1.5"/>
</svg>
<div class="a" style="left:222px;top:130px;width:1178px;height:558px;background:#f1f0f4"></div>
<div class="a" style="left:222.5px;top:129.5px;width:1175.5px;height:556.5px;background:#ffffff;border-radius:1px"></div>
<div class="a" style="left:225px;top:132px;width:1170px;height:550px;background:#e9e6e1"></div>
<svg style="left:0;top:0" width="1400" height="788"><path d="M258 137h1v1h-1zM258 213h1v1h-1zM258 290h1v1h-1zM258 366h1v1h-1zM258 443h1v1h-1zM258 519h1v1h-1zM258 595h1v1h-1zM258 672h1v1h-1zM334 137h1v1h-1zM334 213h1v1h-1zM334 290h1v1h-1zM334 366h1v1h-1zM334 443h1v1h-1zM334 519h1v1h-1zM334 595h1v1h-1zM334 672h1v1h-1zM411 137h1v1h-1zM411 213h1v1h-1zM411 290h1v1h-1zM411 366h1v1h-1zM411 443h1v1h-1zM411 519h1v1h-1zM411 595h1v1h-1zM411 672h1v1h-1zM487 137h1v1h-1zM487 213h1v1h-1zM487 290h1v1h-1zM487 366h1v1h-1zM487 443h1v1h-1zM487 519h1v1h-1zM487 595h1v1h-1zM487 672h1v1h-1zM563 137h1v1h-1zM563 213h1v1h-1zM563 290h1v1h-1zM563 366h1v1h-1zM563 443h1v1h-1zM563 519h1v1h-1zM563 595h1v1h-1zM563 672h1v1h-1zM640 137h1v1h-1zM640 213h1v1h-1zM640 290h1v1h-1zM640 366h1v1h-1zM640 443h1v1h-1zM640 519h1v1h-1zM640 595h1v1h-1zM640 672h1v1h-1zM716 137h1v1h-1zM716 213h1v1h-1zM716 290h1v1h-1zM716 366h1v1h-1zM716 443h1v1h-1zM716 519h1v1h-1zM716 595h1v1h-1zM716 672h1v1h-1zM793 137h1v1h-1zM793 213h1v1h-1zM793 290h1v1h-1zM793 366h1v1h-1zM793 443h1v1h-1zM793 519h1v1h-1zM793 595h1v1h-1zM793 672h1v1h-1zM869 137h1v1h-1zM869 213h1v1h-1zM869 290h1v1h-1zM869 366h1v1h-1zM869 443h1v1h-1zM869 519h1v1h-1zM869 595h1v1h-1zM869 672h1v1h-1zM945 137h1v1h-1zM945 213h1v1h-1zM945 290h1v1h-1zM945 366h1v1h-1zM945 443h1v1h-1zM945 519h1v1h-1zM945 595h1v1h-1zM945 672h1v1h-1zM1022 137h1v1h-1zM1022 213h1v1h-1zM1022 290h1v1h-1zM1022 366h1v1h-1zM1022 443h1v1h-1zM1022 519h1v1h-1zM1022 595h1v1h-1zM1022 672h1v1h-1zM1098 137h1v1h-1zM1098 213h1v1h-1zM1098 290h1v1h-1zM1098 366h1v1h-1zM1098 443h1v1h-1zM1098 519h1v1h-1zM1098 595h1v1h-1zM1098 672h1v1h-1zM1174 137h1v1h-1zM1174 213h1v1h-1zM1174 290h1v1h-1zM1174 366h1v1h-1zM1174 443h1v1h-1zM1174 519h1v1h-1zM1174 595h1v1h-1zM1174 672h1v1h-1zM1251 137h1v1h-1zM1251 213h1v1h-1zM1251 290h1v1h-1zM1251 366h1v1h-1zM1251 443h1v1h-1zM1251 519h1v1h-1zM1251 595h1v1h-1zM1251 672h1v1h-1zM1327 137h1v1h-1zM1327 213h1v1h-1zM1327 290h1v1h-1zM1327 366h1v1h-1zM1327 443h1v1h-1zM1327 519h1v1h-1zM1327 595h1v1h-1zM1327 672h1v1h-1z" fill="#555"/><path d="M225 133 H1395" stroke="#7c7874" stroke-width="2" fill="none"/><path d="M225.5 133 V682" stroke="#8a8682" stroke-width="1" fill="none"/><path d="M252 133 V682" stroke="#6f6b67" stroke-width="2.2" fill="none"/><path d="M313.7 133 V682" stroke="#5a5652" stroke-width="1.4" fill="none"/><path d="M596.5 133 V682" stroke="#5a5652" stroke-width="1.4" fill="none"/><path d="M658.5 133 V682" stroke="#5a5652" stroke-width="1.4" fill="none"/><path d="M785.6 133 V682" stroke="#6f6b67" stroke-width="2.2" fill="none"/><path d="M1321.5 133 V682" stroke="#5a5652" stroke-width="1.4" fill="none"/><path d="M313.7 190.7 H596.5" stroke="#5a5652" stroke-width="1.4" fill="none"/><path d="M313.7 359.7 H596.5" stroke="#5a5652" stroke-width="1.4" fill="none"/><path d="M313.7 420 H596.5" stroke="#5a5652" stroke-width="1.4" fill="none"/><path d="M313.7 588.1 H596.5" stroke="#5a5652" stroke-width="1.4" fill="none"/><path d="M313.7 648.9 H596.5" stroke="#5a5652" stroke-width="1.4" fill="none"/><path d="M308 140.5 H378 M343 133 V175" stroke="#444" stroke-width="1" fill="none"/><rect x="339.5" y="137" width="7" height="7" fill="none" stroke="#444" stroke-width="1"/><path transform="translate(349.10 192.80) scale(1.000)" d="M5 0 C8 0 10 3 10 7 V13 C10 17 8 20 5 20 C2 20 0 17 0 13 V7 C0 3 2 0 5 0 Z M6.5 16.5 L9.5 20.5" stroke="#3a3a3a" stroke-width="1.15" fill="none"/><path transform="translate(361.40 192.80) scale(1.000)" d="M4.6 0 C7.5 0 9.2 3 9.2 7 V13 C9.2 17 7.5 20 4.6 20 C1.7 20 0 17 0 13 V7 C0 3 1.7 0 4.6 0 Z" stroke="#3a3a3a" stroke-width="1.15" fill="none"/><path transform="translate(502.00 220.20) scale(1.000)" d="M0 0 L10 20 M10 0 L0 20" stroke="#3a3a3a" stroke-width="1.15" fill="none"/><path transform="translate(514.30 220.20) scale(1.000)" d="M4.6 0 C7.5 0 9.2 3 9.2 7 V13 C9.2 17 7.5 20 4.6 20 C1.7 20 0 17 0 13 V7 C0 3 1.7 0 4.6 0 Z" stroke="#3a3a3a" stroke-width="1.15" fill="none"/><path transform="translate(344.70 440.30) scale(1.000)" d="M5 0 C8 0 10 3 10 7 V13 C10 17 8 20 5 20 C2 20 0 17 0 13 V7 C0 3 2 0 5 0 Z M6.5 16.5 L9.5 20.5" stroke="#3a3a3a" stroke-width="1.15" fill="none"/><path transform="translate(357.00 440.30) scale(1.000)" d="M0 5.5 L5 0 V20" stroke="#3a3a3a" stroke-width="1.15" fill="none"/><path transform="translate(379.20 442.20) scale(1.000)" d="M5 0 C8 0 10 3 10 7 V13 C10 17 8 20 5 20 C2 20 0 17 0 13 V7 C0 3 2 0 5 0 Z M6.5 16.5 L9.5 20.5" stroke="#3a3a3a" stroke-width="1.15" fill="none"/><path transform="translate(391.50 442.20) scale(1.000)" d="M0.3 3 C1.5 1 3 0 5 0 C7.5 0 8.8 2 8.8 5 C8.8 9 5.5 12.5 0.3 20 H8.6" stroke="#3a3a3a" stroke-width="1.15" fill="none"/><path transform="translate(428.30 440.10) scale(1.000)" d="M5 0 C8 0 10 3 10 7 V13 C10 17 8 20 5 20 C2 20 0 17 0 13 V7 C0 3 2 0 5 0 Z M6.5 16.5 L9.5 20.5" stroke="#3a3a3a" stroke-width="1.15" fill="none"/><path transform="translate(440.60 440.10) scale(1.000)" d="M0 3.5 C1.5 0.7 3 0 4.6 0 C7 0 8.6 2 8.6 4.6 C8.6 7.2 6.8 9.6 5.2 9.6 C7.6 10 9.2 12.5 9.2 15 C9.2 18 7.2 20 4.6 20 C2.6 20 1.2 19 0 17" stroke="#3a3a3a" stroke-width="1.15" fill="none"/><path transform="translate(538.70 446.10) scale(1.000)" d="M0 0 H9.2 M4.6 0 V20" stroke="#3a3a3a" stroke-width="1.15" fill="none"/><path transform="translate(551.00 446.10) scale(1.000)" d="M0 5.5 L5 0 V20" stroke="#3a3a3a" stroke-width="1.15" fill="none"/><path transform="translate(395.00 661.00) scale(1.000)" d="M0 20 V0 L9.5 20 V0" stroke="#3a3a3a" stroke-width="1.15" fill="none"/><path transform="translate(407.30 661.00) scale(1.000)" d="M0 5.5 L5 0 V20" stroke="#3a3a3a" stroke-width="1.15" fill="none"/><path transform="translate(710.90 248.20) scale(1.000)" d="M0 0 L10 20 M10 0 L0 20" stroke="#3a3a3a" stroke-width="1.15" fill="none"/><path transform="translate(723.20 248.20) scale(1.000)" d="M0.3 3 C1.5 1 3 0 5 0 C7.5 0 8.8 2 8.8 5 C8.8 9 5.5 12.5 0.3 20 H8.6" stroke="#3a3a3a" stroke-width="1.15" fill="none"/><path transform="translate(717.30 527.00) scale(1.000)" d="M0 0 L10 20 M10 0 L0 20" stroke="#3a3a3a" stroke-width="1.15" fill="none"/><path transform="translate(729.60 527.00) scale(1.000)" d="M0 3.5 C1.5 0.7 3 0 4.6 0 C7 0 8.6 2 8.6 4.6 C8.6 7.2 6.8 9.6 5.2 9.6 C7.6 10 9.2 12.5 9.2 15 C9.2 18 7.2 20 4.6 20 C2.6 20 1.2 19 0 17" stroke="#3a3a3a" stroke-width="1.15" fill="none"/><path transform="translate(908.00 149.10) scale(1.000)" d="M8.6 3.5 C7.6 1 6 0 4.5 0 C2 0 0.3 2 0.3 4.6 C0.3 7.2 2.2 8.6 4.6 10 C7 11.4 9.1 13 9.1 15.6 C9.1 18.5 7.2 20 4.5 20 C2.5 20 1 19 0 17" stroke="#3a3a3a" stroke-width="1.15" fill="none"/><path transform="translate(920.30 149.10) scale(1.000)" d="M6 0 L0 16 H8.4 M6 12 V20" stroke="#3a3a3a" stroke-width="1.15" fill="none"/><path transform="translate(1044.50 154.60) scale(1.000)" d="M8.6 3.5 C7.6 1 6 0 4.5 0 C2 0 0.3 2 0.3 4.6 C0.3 7.2 2.2 8.6 4.6 10 C7 11.4 9.1 13 9.1 15.6 C9.1 18.5 7.2 20 4.5 20 C2.5 20 1 19 0 17" stroke="#3a3a3a" stroke-width="1.15" fill="none"/><path transform="translate(1056.80 154.60) scale(1.000)" d="M0 1.5 V0 H9 L0.5 20" stroke="#3a3a3a" stroke-width="1.15" fill="none"/><path transform="translate(1175.20 150.00) scale(1.000)" d="M8.6 3.5 C7.6 1 6 0 4.5 0 C2 0 0.3 2 0.3 4.6 C0.3 7.2 2.2 8.6 4.6 10 C7 11.4 9.1 13 9.1 15.6 C9.1 18.5 7.2 20 4.5 20 C2.5 20 1 19 0 17" stroke="#3a3a3a" stroke-width="1.15" fill="none"/><path transform="translate(1187.50 150.00) scale(1.000)" d="M0 5.5 L5 0 V20" stroke="#3a3a3a" stroke-width="1.15" fill="none"/><path transform="translate(1042.00 228.50) scale(1.000)" d="M0 0 V20 M9.2 0 V20 M0 10.5 H9.2" stroke="#3a3a3a" stroke-width="1.15" fill="none"/><path transform="translate(1054.30 228.50) scale(1.000)" d="M0 5.5 L5 0 V20" stroke="#3a3a3a" stroke-width="1.15" fill="none"/><path transform="translate(907.50 302.50) scale(1.000)" d="M0 0 V20 M9.2 0 V20 M0 10.5 H9.2" stroke="#3a3a3a" stroke-width="1.15" fill="none"/><path transform="translate(919.80 302.50) scale(1.000)" d="M6 0 L0 16 H8.4 M6 12 V20" stroke="#3a3a3a" stroke-width="1.15" fill="none"/><path transform="translate(1042.20 303.00) scale(1.000)" d="M0 0 V20 M9.2 0 V20 M0 10.5 H9.2" stroke="#3a3a3a" stroke-width="1.15" fill="none"/><path transform="translate(1054.50 303.00) scale(1.000)" d="M0 3.5 C1.5 0.7 3 0 4.6 0 C7 0 8.6 2 8.6 4.6 C8.6 7.2 6.8 9.6 5.2 9.6 C7.6 10 9.2 12.5 9.2 15 C9.2 18 7.2 20 4.6 20 C2.6 20 1.2 19 0 17" stroke="#3a3a3a" stroke-width="1.15" fill="none"/><path transform="translate(1175.20 304.00) scale(1.000)" d="M0 0 V20 M9.2 0 V20 M0 10.5 H9.2" stroke="#3a3a3a" stroke-width="1.15" fill="none"/><path transform="translate(1187.50 304.00) scale(1.000)" d="M0.3 3 C1.5 1 3 0 5 0 C7.5 0 8.8 2 8.8 5 C8.8 9 5.5 12.5 0.3 20 H8.6" stroke="#3a3a3a" stroke-width="1.15" fill="none"/><path transform="translate(907.50 379.00) scale(1.000)" d="M0 0 V20 M9.2 0 V20 M0 10.5 H9.2" stroke="#3a3a3a" stroke-width="1.15" fill="none"/><path transform="translate(919.80 379.00) scale(1.000)" d="M0 1.5 V0 H9 L0.5 20" stroke="#3a3a3a" stroke-width="1.15" fill="none"/><path transform="translate(1042.20 379.00) scale(1.000)" d="M0 0 V20 M9.2 0 V20 M0 10.5 H9.2" stroke="#3a3a3a" stroke-width="1.15" fill="none"/><path transform="translate(1054.50 379.00) scale(1.000)" d="M8.4 3.5 C7.6 1 6.2 0 4.6 0 C1.8 0 0 3 0 8.5 V13 C0 17.5 2 20 4.6 20 C7.2 20 9.2 17.5 9.2 14 C9.2 10.5 7.2 8.3 4.6 8.3 C2.5 8.3 0.8 9.5 0 11.5" stroke="#3a3a3a" stroke-width="1.15" fill="none"/><path transform="translate(1175.20 379.00) scale(1.000)" d="M0 0 V20 M9.2 0 V20 M0 10.5 H9.2" stroke="#3a3a3a" stroke-width="1.15" fill="none"/><path transform="translate(1187.50 379.00) scale(1.000)" d="M8.6 0 H0.6 L0.2 10.5 C1.2 8.5 2.8 7.5 4.6 7.5 C7.2 7.5 9.2 10 9.2 13.8 C9.2 17.6 7.2 20 4.6 20 C2.6 20 1 19 0 17.2" stroke="#3a3a3a" stroke-width="1.15" fill="none"/><path d="M313.7 262.6 H581.6 M313.7 267.2 H581.6 M313.7 283.6 H581.6 M313.7 289.3 H581.6" stroke="#444" stroke-width="1" fill="none"/><path d="M570 262.6 H581.6 V289.3 H570" stroke="#444" stroke-width="1" fill="none"/><path d="M313.7 493.1 H596.5 M313.7 497.2 H596.5 M313.7 515.5 H596.5 M313.7 519.6 H596.5" stroke="#444" stroke-width="1" fill="none"/><path d="M349.5 244.2 H446 V308.4 H349.5 Z" fill="#e9e6e1" stroke="#333" stroke-width="1.1"/><path d="M351.6 244 V241 H361.40000000000003 V244 M351.6 308.6 V311.2 H361.40000000000003 V308.6" stroke="#444" stroke-width="1" fill="none"/><path d="M365.5 244 V241 H375.3 V244 M365.5 308.6 V311.2 H375.3 V308.6" stroke="#444" stroke-width="1" fill="none"/><path d="M379.5 244 V241 H389.3 V244 M379.5 308.6 V311.2 H389.3 V308.6" stroke="#444" stroke-width="1" fill="none"/><path d="M393.4 244 V241 H403.2 V244 M393.4 308.6 V311.2 H403.2 V308.6" stroke="#444" stroke-width="1" fill="none"/><path d="M349.5 246.2 H446" stroke="#555" stroke-width="2" fill="none"/><path d="M349.5 258.1 H446 M349.5 293 H446 M349.5 306.3 H446" stroke="#444" stroke-width="1" fill="none"/><circle cx="356.5" cy="251.9" r="3.6" fill="none" stroke="#333" stroke-width="1"/><circle cx="356.5" cy="300" r="3.6" fill="none" stroke="#333" stroke-width="1"/><circle cx="370.3" cy="251.9" r="3.6" fill="none" stroke="#333" stroke-width="1"/><circle cx="370.3" cy="300" r="3.6" fill="none" stroke="#333" stroke-width="1"/><circle cx="384.3" cy="251.9" r="3.6" fill="none" stroke="#333" stroke-width="1"/><circle cx="384.3" cy="300" r="3.6" fill="none" stroke="#333" stroke-width="1"/><circle cx="398" cy="251.9" r="3.6" fill="none" stroke="#333" stroke-width="1"/><circle cx="398" cy="300" r="3.6" fill="none" stroke="#333" stroke-width="1"/><path d="M356.5 258.1 V270.3 H397.9 V258.1" stroke="#444" stroke-width="1" fill="none"/><path d="M405.6 258.1 V293 M360 290.2 H405.6" stroke="#444" stroke-width="1" fill="none"/><path d="M360 290.5 H405" stroke="#222" stroke-width="1.6" fill="none"/><path d="M413 258.1 Q407 275 412 293 M420 258.1 Q413 275 418 293" stroke="#555" stroke-width="0.8" fill="none"/><path d="M350.5 279 V285" stroke="#333" stroke-width="2" fill="none"/><path d="M426.5 257 Q423 262 423.5 272 Q425 282 434.9 286.5 Q444.5 282 444.5 272 Q445 262 440.5 257 Z" fill="#e9e6e1" stroke="#333" stroke-width="1"/><circle cx="434.9" cy="275.6" r="4.8" fill="none" stroke="#333" stroke-width="1"/><path d="M420.2 217.7 L439 216.3 L437 239 L426.5 239 Z" fill="#e9e6e1" stroke="#333" stroke-width="1"/><path d="M426.5 239 H437 V266 Q434.9 263 431.5 263 H426.5 Z" fill="#e9e6e1" stroke="#333" stroke-width="1"/><rect x="429.5" y="222" width="3" height="30" fill="none" stroke="#444" stroke-width="0.9"/><path d="M420.2 217.7 L439 216.3" stroke="#222" stroke-width="1.8" fill="none"/><path d="M426.5 307 V300 Q426.5 293.7 433.8 293.7 Q441.2 293.7 441.2 300 V307 Z" fill="#e9e6e1" stroke="#333" stroke-width="1"/><circle cx="434" cy="301" r="1.2" fill="none" stroke="#333" stroke-width="0.8"/><path d="M426.5 306.8 H441" stroke="#222" stroke-width="1.8" fill="none"/><path d="M502.3 246.8 H570 V301.4 H502.3 Z" fill="#e9e6e1" stroke="#333" stroke-width="1.1"/><path d="M519.4 246.8 V301.4 M536.3 246.8 V301.4 M553.2 246.8 V301.4" stroke="#333" stroke-width="1" fill="none"/><path d="M502.3 250.6 H570 M502.3 255 H570 M502.3 297.6 H570" stroke="#444" stroke-width="0.9" fill="none"/><path d="M502.3 256.8 H570" stroke="#111" stroke-width="2.3" fill="none"/><path d="M502.3 259.6 H570" stroke="#777" stroke-width="2.3" fill="none"/><path d="M502.3 293 H570" stroke="#777" stroke-width="2.3" fill="none"/><path d="M502.3 295.6 H570" stroke="#111" stroke-width="2.1" fill="none"/><circle cx="527.8" cy="266.5" r="2.4" fill="#e9e6e1" stroke="#333" stroke-width="0.9"/><circle cx="544.7" cy="266.5" r="2.4" fill="#e9e6e1" stroke="#333" stroke-width="0.9"/><circle cx="561.5" cy="266.5" r="2.4" fill="#e9e6e1" stroke="#333" stroke-width="0.9"/><circle cx="511" cy="286.1" r="2.4" fill="#e9e6e1" stroke="#333" stroke-width="0.9"/><circle cx="527.8" cy="286.1" r="2.4" fill="#e9e6e1" stroke="#333" stroke-width="0.9"/><circle cx="544.7" cy="286.1" r="2.4" fill="#e9e6e1" stroke="#333" stroke-width="0.9"/><circle cx="561.5" cy="286.1" r="2.4" fill="#e9e6e1" stroke="#333" stroke-width="0.9"/><path d="M508.5 261 H513.5 L516.5 264 V269 L513.5 272.5 H508.5 L505.5 269 V264 Z" fill="#0a2eff" stroke="none" stroke-width="1"/><path d="M346 473.4 H379.8 V539.1 H346 Z" fill="#e9e6e1" stroke="#111" stroke-width="1.4"/><circle cx="352.6" cy="479.5" r="3.2" fill="#222"/><path d="M350.8 479.5 h3.6 M352.6 477.7 v3.6" stroke="#ddd" stroke-width="0.7"/><circle cx="352.6" cy="533.6" r="3.2" fill="#222"/><path d="M350.8 533.6 h3.6 M352.6 531.8 v3.6" stroke="#ddd" stroke-width="0.7"/><circle cx="363.0" cy="479.5" r="3.2" fill="#222"/><path d="M361.2 479.5 h3.6 M363.0 477.7 v3.6" stroke="#ddd" stroke-width="0.7"/><circle cx="363.0" cy="533.6" r="3.2" fill="#222"/><path d="M361.2 533.6 h3.6 M363.0 531.8 v3.6" stroke="#ddd" stroke-width="0.7"/><circle cx="373.40000000000003" cy="479.5" r="3.2" fill="#222"/><path d="M371.6 479.5 h3.6 M373.40000000000003 477.7 v3.6" stroke="#ddd" stroke-width="0.7"/><circle cx="373.40000000000003" cy="533.6" r="3.2" fill="#222"/><path d="M371.6 533.6 h3.6 M373.40000000000003 531.8 v3.6" stroke="#ddd" stroke-width="0.7"/><path d="M346 489 H379.8" stroke="#111" stroke-width="1.5" fill="none"/><path d="M346 495.8 H379.8 M361.5 489 V495.8" stroke="#222" stroke-width="1.1" fill="none"/><path d="M346 523.7 H379.8" stroke="#222" stroke-width="1.1" fill="none"/><path d="M346 529.3 H379.8" stroke="#333" stroke-width="1.4" fill="none"/><path d="M348.5 501.5 H357 V523 H348.5 Z" fill="#e9e6e1" stroke="#111" stroke-width="1.2"/><path d="M349 502 H356.5 V509 H349 Z" fill="#333" stroke="none" stroke-width="1"/><path d="M350 504 H355.5 M350 506.5 H355.5" stroke="#ccc" stroke-width="0.7" fill="none"/><circle cx="352.8" cy="514.5" r="2.3" fill="#fff" stroke="#222" stroke-width="0.8"/><path d="M360.5 501.5 H369.5 V521 H360.5 Z" fill="#e9e6e1" stroke="#111" stroke-width="1.2"/><path d="M361.5 506 H368.5 V520 H361.5 Z" fill="#f2f0ec" stroke="#222" stroke-width="1"/><circle cx="365" cy="509.5" r="2.4" fill="#ddd" stroke="#111" stroke-width="1"/><rect x="363.5" y="514" width="3" height="3" fill="#333"/><path d="M372 505.5 H375" stroke="#111" stroke-width="1.2" fill="none"/><path d="M380 473.4 H413.8 V539.1 H380 Z" fill="#e9e6e1" stroke="#111" stroke-width="1.4"/><circle cx="386.6" cy="479.5" r="3.2" fill="#222"/><path d="M384.8 479.5 h3.6 M386.6 477.7 v3.6" stroke="#ddd" stroke-width="0.7"/><circle cx="386.6" cy="533.6" r="3.2" fill="#222"/><path d="M384.8 533.6 h3.6 M386.6 531.8 v3.6" stroke="#ddd" stroke-width="0.7"/><circle cx="397.0" cy="479.5" r="3.2" fill="#222"/><path d="M395.2 479.5 h3.6 M397.0 477.7 v3.6" stroke="#ddd" stroke-width="0.7"/><circle cx="397.0" cy="533.6" r="3.2" fill="#222"/><path d="M395.2 533.6 h3.6 M397.0 531.8 v3.6" stroke="#ddd" stroke-width="0.7"/><circle cx="407.40000000000003" cy="479.5" r="3.2" fill="#222"/><path d="M405.6 479.5 h3.6 M407.40000000000003 477.7 v3.6" stroke="#ddd" stroke-width="0.7"/><circle cx="407.40000000000003" cy="533.6" r="3.2" fill="#222"/><path d="M405.6 533.6 h3.6 M407.40000000000003 531.8 v3.6" stroke="#ddd" stroke-width="0.7"/><path d="M380 489 H413.8" stroke="#111" stroke-width="1.5" fill="none"/><path d="M380 495.8 H413.8 M395.5 489 V495.8" stroke="#222" stroke-width="1.1" fill="none"/><path d="M380 523.7 H413.8" stroke="#222" stroke-width="1.1" fill="none"/><path d="M380 529.3 H413.8" stroke="#333" stroke-width="1.4" fill="none"/><path d="M382.5 501.5 H391 V523 H382.5 Z" fill="#e9e6e1" stroke="#111" stroke-width="1.2"/><path d="M383 502 H390.5 V509 H383 Z" fill="#333" stroke="none" stroke-width="1"/><path d="M384 504 H389.5 M384 506.5 H389.5" stroke="#ccc" stroke-width="0.7" fill="none"/><circle cx="386.8" cy="514.5" r="2.3" fill="#fff" stroke="#222" stroke-width="0.8"/><path d="M394.5 501.5 H403.5 V521 H394.5 Z" fill="#e9e6e1" stroke="#111" stroke-width="1.2"/><path d="M395.5 506 H402.5 V520 H395.5 Z" fill="#f2f0ec" stroke="#222" stroke-width="1"/><circle cx="399" cy="509.5" r="2.4" fill="#ddd" stroke="#111" stroke-width="1"/><rect x="397.5" y="514" width="3" height="3" fill="#333"/><path d="M406 505.5 H409" stroke="#111" stroke-width="1.2" fill="none"/><path d="M380 473.4 V539.1" stroke="#111" stroke-width="2.2" fill="none"/><path d="M418.4 473.4 H472.7 V539.2 H418.4 Z" fill="#e9e6e1" stroke="#333" stroke-width="1.1"/><circle cx="424.6" cy="480.5" r="2.3" fill="none" stroke="#333" stroke-width="0.9"/><circle cx="424.6" cy="532.9" r="2.3" fill="none" stroke="#333" stroke-width="0.9"/><circle cx="438.4" cy="480.5" r="2.3" fill="none" stroke="#333" stroke-width="0.9"/><circle cx="438.4" cy="532.9" r="2.3" fill="none" stroke="#333" stroke-width="0.9"/><circle cx="452.3" cy="480.5" r="2.3" fill="none" stroke="#333" stroke-width="0.9"/><circle cx="452.3" cy="532.9" r="2.3" fill="none" stroke="#333" stroke-width="0.9"/><circle cx="466" cy="480.5" r="2.3" fill="none" stroke="#333" stroke-width="0.9"/><circle cx="466" cy="532.9" r="2.3" fill="none" stroke="#333" stroke-width="0.9"/><path d="M418.4 489.4 H472.7 M418.4 523.4 H472.7" stroke="#444" stroke-width="1.8" fill="none"/><path d="M418.4 496.5 H472.7 M418.4 511.4 H472.7" stroke="#333" stroke-width="1" fill="none"/><path d="M420 503 Q420 500 423 500 H468 Q471 500 471 503 Z" fill="#e9e6e1" stroke="#333" stroke-width="0.9"/><path d="M418.4 505.3 H472.7" stroke="#333" stroke-width="0.9" fill="none"/><path d="M428 510.7 V505.3 H435.5 V510.7" stroke="#333" stroke-width="0.9" fill="none"/><path d="M441.5 510.7 V505.3 H449.0 V510.7" stroke="#333" stroke-width="0.9" fill="none"/><path d="M455.7 510.7 V505.3 H463.2 V510.7" stroke="#333" stroke-width="0.9" fill="none"/><path d="M538.9 473.4 H585.7 V539.2 H538.9 Z" fill="#e9e6e1" stroke="#333" stroke-width="1.1"/><path d="M538.9 478.2 H585.7 M538.9 535.2 H585.7" stroke="#333" stroke-width="1" fill="none"/><circle cx="548.1" cy="487.7" r="1.9" fill="none" stroke="#333" stroke-width="0.9"/><circle cx="548.1" cy="525.7" r="1.9" fill="none" stroke="#333" stroke-width="0.9"/><circle cx="576.2" cy="487.7" r="1.9" fill="none" stroke="#333" stroke-width="0.9"/><circle cx="576.2" cy="525.7" r="1.9" fill="none" stroke="#333" stroke-width="0.9"/><path d="M673.2 273.3 H717.5 V457.7 H673.2 Z" fill="#d8d6d2" stroke="#111" stroke-width="1"/><path d="M677 273.3 H681.5 V457.7 H677 Z" fill="#f4f2ee" stroke="none" stroke-width="1"/><path d="M686.8 273.3 H691 V457.7 H686.8 Z" fill="#f4f2ee" stroke="none" stroke-width="1"/><path d="M692 273.3 H698 V457.7 H692 Z" fill="#f6f4f0" stroke="none" stroke-width="1"/><path d="M699 273.3 H704.5 V457.7 H699 Z" fill="#efedea" stroke="none" stroke-width="1"/><path d="M710 273.3 H713 V457.7 H710 Z" fill="#eeeae6" stroke="none" stroke-width="1"/><path d="M714 273.3 H717 V457.7 H714 Z" fill="#d8d6d2" stroke="none" stroke-width="1"/><path d="M681.5 273.3 H686.8 V457.7 H681.5 Z" fill="#8d8a87" stroke="none" stroke-width="1"/><path d="M704.5 273.3 H706.5 V457.7 H704.5 Z" fill="#555" stroke="none" stroke-width="1"/><path d="M673.2 273.30 H717.5M673.2 276.96 H717.5M673.2 280.62 H717.5M673.2 284.28 H717.5M673.2 287.94 H717.5M673.2 291.60 H717.5M673.2 295.26 H717.5M673.2 298.92 H717.5M673.2 302.58 H717.5M673.2 306.24 H717.5M673.2 309.90 H717.5M673.2 313.56 H717.5M673.2 317.22 H717.5M673.2 320.88 H717.5M673.2 324.54 H717.5M673.2 328.20 H717.5M673.2 331.86 H717.5M673.2 335.52 H717.5M673.2 339.18 H717.5M673.2 342.84 H717.5M673.2 346.50 H717.5M673.2 350.16 H717.5M673.2 353.82 H717.5M673.2 357.48 H717.5M673.2 361.14 H717.5M673.2 364.80 H717.5M673.2 368.46 H717.5M673.2 372.12 H717.5M673.2 375.78 H717.5M673.2 379.44 H717.5M673.2 383.10 H717.5M673.2 386.76 H717.5M673.2 390.42 H717.5M673.2 394.08 H717.5M673.2 397.74 H717.5M673.2 401.40 H717.5M673.2 405.06 H717.5M673.2 408.72 H717.5M673.2 412.38 H717.5M673.2 416.04 H717.5M673.2 419.70 H717.5M673.2 423.36 H717.5M673.2 427.02 H717.5M673.2 430.68 H717.5M673.2 434.34 H717.5M673.2 438.00 H717.5M673.2 441.66 H717.5M673.2 445.32 H717.5M673.2 448.98 H717.5M673.2 452.64 H717.5M673.2 456.30 H717.5" stroke="#2a2a2a" stroke-width="1" fill="none"/><path d="M674.8 273.3 V457.7 M682.5 273.3 V457.7 M686.7 273.3 V457.7 M691.6 273.3 V457.7 M698.5 273.3 V457.7 M709.2 273.3 V457.7" stroke="#222" stroke-width="0.9" fill="none"/><path d="M705.6 273.3 V457.7" stroke="#000" stroke-width="1.8" fill="none"/><path d="M717.5 273.3 V457.7" stroke="#111" stroke-width="1" fill="none"/><path d="M681 273.3 V266.2 H708.8 V273.3" fill="#e9e6e1" stroke="#333" stroke-width="1"/><path d="M685 266.2 V273.3 M705 266.2 V273.3" stroke="#444" stroke-width="1" fill="none"/><path d="M681.6 457.7 V682 M686.6 457.7 V682 M703.7 457.7 V682 M708.6 457.7 V682" stroke="#444" stroke-width="1" fill="none"/><path d="M670.8 551.6 H725.2 Q725.8 551.6 725.8 552.3 V554.9 Q725.8 555.6 725.2 555.6 H670.8 Q670.2 555.6 670.2 554.9 V552.3 Q670.2 551.6 670.8 551.6 Z" fill="#cfccc8" stroke="#111" stroke-width="1"/><path d="M672 552.7 H675 V554.5 H672 Z" fill="#999" stroke="none" stroke-width="1"/><path d="M675.5 552.7 H678 V554.5 H675.5 Z" fill="#eee" stroke="none" stroke-width="1"/><path d="M679 552.7 H681 V554.5 H679 Z" fill="#fff" stroke="none" stroke-width="1"/><path d="M682.5 552.7 H689.5 V554.5 H682.5 Z" fill="#000" stroke="none" stroke-width="1"/><path d="M691 552.7 H693 V554.5 H691 Z" fill="#eee" stroke="none" stroke-width="1"/><path d="M694 552.7 H700 V554.5 H694 Z" fill="#fff" stroke="none" stroke-width="1"/><path d="M701 552.7 H706.5 V554.5 H701 Z" fill="#000" stroke="none" stroke-width="1"/><path d="M708 552.7 H711 V554.5 H708 Z" fill="#888" stroke="none" stroke-width="1"/><path d="M712 552.7 H714 V554.5 H712 Z" fill="#fff" stroke="none" stroke-width="1"/><path d="M715 552.7 H716.5 V554.5 H715 Z" fill="#333" stroke="none" stroke-width="1"/><path d="M718 552.7 H723.5 V554.5 H718 Z" fill="#fff" stroke="none" stroke-width="1"/><path d="M670.8 557.6 H725.2 Q725.8 557.6 725.8 558.3 V560.9 Q725.8 561.6 725.2 561.6 H670.8 Q670.2 561.6 670.2 560.9 V558.3 Q670.2 557.6 670.8 557.6 Z" fill="#cfccc8" stroke="#111" stroke-width="1"/><path d="M672 558.7 H675 V560.5 H672 Z" fill="#999" stroke="none" stroke-width="1"/><path d="M675.5 558.7 H678 V560.5 H675.5 Z" fill="#eee" stroke="none" stroke-width="1"/><path d="M679 558.7 H681 V560.5 H679 Z" fill="#fff" stroke="none" stroke-width="1"/><path d="M682.5 558.7 H689.5 V560.5 H682.5 Z" fill="#000" stroke="none" stroke-width="1"/><path d="M691 558.7 H693 V560.5 H691 Z" fill="#eee" stroke="none" stroke-width="1"/><path d="M694 558.7 H700 V560.5 H694 Z" fill="#fff" stroke="none" stroke-width="1"/><path d="M701 558.7 H706.5 V560.5 H701 Z" fill="#000" stroke="none" stroke-width="1"/><path d="M708 558.7 H711 V560.5 H708 Z" fill="#888" stroke="none" stroke-width="1"/><path d="M712 558.7 H714 V560.5 H712 Z" fill="#fff" stroke="none" stroke-width="1"/><path d="M715 558.7 H716.5 V560.5 H715 Z" fill="#333" stroke="none" stroke-width="1"/><path d="M718 558.7 H723.5 V560.5 H718 Z" fill="#fff" stroke="none" stroke-width="1"/><path d="M670.8 563.6 H725.2 Q725.8 563.6 725.8 564.3 V566.9 Q725.8 567.6 725.2 567.6 H670.8 Q670.2 567.6 670.2 566.9 V564.3 Q670.2 563.6 670.8 563.6 Z" fill="#cfccc8" stroke="#111" stroke-width="1"/><path d="M672 564.7 H675 V566.5 H672 Z" fill="#999" stroke="none" stroke-width="1"/><path d="M675.5 564.7 H678 V566.5 H675.5 Z" fill="#eee" stroke="none" stroke-width="1"/><path d="M679 564.7 H681 V566.5 H679 Z" fill="#fff" stroke="none" stroke-width="1"/><path d="M682.5 564.7 H689.5 V566.5 H682.5 Z" fill="#000" stroke="none" stroke-width="1"/><path d="M691 564.7 H693 V566.5 H691 Z" fill="#eee" stroke="none" stroke-width="1"/><path d="M694 564.7 H700 V566.5 H694 Z" fill="#fff" stroke="none" stroke-width="1"/><path d="M701 564.7 H706.5 V566.5 H701 Z" fill="#000" stroke="none" stroke-width="1"/><path d="M708 564.7 H711 V566.5 H708 Z" fill="#888" stroke="none" stroke-width="1"/><path d="M712 564.7 H714 V566.5 H712 Z" fill="#fff" stroke="none" stroke-width="1"/><path d="M715 564.7 H716.5 V566.5 H715 Z" fill="#333" stroke="none" stroke-width="1"/><path d="M718 564.7 H723.5 V566.5 H718 Z" fill="#fff" stroke="none" stroke-width="1"/><path d="M670.8 569.6 H725.2 Q725.8 569.6 725.8 570.3 V572.9 Q725.8 573.6 725.2 573.6 H670.8 Q670.2 573.6 670.2 572.9 V570.3 Q670.2 569.6 670.8 569.6 Z" fill="#cfccc8" stroke="#111" stroke-width="1"/><path d="M672 570.7 H675 V572.5 H672 Z" fill="#999" stroke="none" stroke-width="1"/><path d="M675.5 570.7 H678 V572.5 H675.5 Z" fill="#eee" stroke="none" stroke-width="1"/><path d="M679 570.7 H681 V572.5 H679 Z" fill="#fff" stroke="none" stroke-width="1"/><path d="M682.5 570.7 H689.5 V572.5 H682.5 Z" fill="#000" stroke="none" stroke-width="1"/><path d="M691 570.7 H693 V572.5 H691 Z" fill="#eee" stroke="none" stroke-width="1"/><path d="M694 570.7 H700 V572.5 H694 Z" fill="#fff" stroke="none" stroke-width="1"/><path d="M701 570.7 H706.5 V572.5 H701 Z" fill="#000" stroke="none" stroke-width="1"/><path d="M708 570.7 H711 V572.5 H708 Z" fill="#888" stroke="none" stroke-width="1"/><path d="M712 570.7 H714 V572.5 H712 Z" fill="#fff" stroke="none" stroke-width="1"/><path d="M715 570.7 H716.5 V572.5 H715 Z" fill="#333" stroke="none" stroke-width="1"/><path d="M718 570.7 H723.5 V572.5 H718 Z" fill="#fff" stroke="none" stroke-width="1"/><path d="M670.8 575.6 H725.2 Q725.8 575.6 725.8 576.3 V578.9 Q725.8 579.6 725.2 579.6 H670.8 Q670.2 579.6 670.2 578.9 V576.3 Q670.2 575.6 670.8 575.6 Z" fill="#cfccc8" stroke="#111" stroke-width="1"/><path d="M672 576.7 H675 V578.5 H672 Z" fill="#999" stroke="none" stroke-width="1"/><path d="M675.5 576.7 H678 V578.5 H675.5 Z" fill="#eee" stroke="none" stroke-width="1"/><path d="M679 576.7 H681 V578.5 H679 Z" fill="#fff" stroke="none" stroke-width="1"/><path d="M682.5 576.7 H689.5 V578.5 H682.5 Z" fill="#000" stroke="none" stroke-width="1"/><path d="M691 576.7 H693 V578.5 H691 Z" fill="#eee" stroke="none" stroke-width="1"/><path d="M694 576.7 H700 V578.5 H694 Z" fill="#fff" stroke="none" stroke-width="1"/><path d="M701 576.7 H706.5 V578.5 H701 Z" fill="#000" stroke="none" stroke-width="1"/><path d="M708 576.7 H711 V578.5 H708 Z" fill="#888" stroke="none" stroke-width="1"/><path d="M712 576.7 H714 V578.5 H712 Z" fill="#fff" stroke="none" stroke-width="1"/><path d="M715 576.7 H716.5 V578.5 H715 Z" fill="#333" stroke="none" stroke-width="1"/><path d="M718 576.7 H723.5 V578.5 H718 Z" fill="#fff" stroke="none" stroke-width="1"/><path d="M670.8 581.6 H725.2 Q725.8 581.6 725.8 582.3 V584.9 Q725.8 585.6 725.2 585.6 H670.8 Q670.2 585.6 670.2 584.9 V582.3 Q670.2 581.6 670.8 581.6 Z" fill="#cfccc8" stroke="#111" stroke-width="1"/><path d="M672 582.7 H675 V584.5 H672 Z" fill="#999" stroke="none" stroke-width="1"/><path d="M675.5 582.7 H678 V584.5 H675.5 Z" fill="#eee" stroke="none" stroke-width="1"/><path d="M679 582.7 H681 V584.5 H679 Z" fill="#fff" stroke="none" stroke-width="1"/><path d="M682.5 582.7 H689.5 V584.5 H682.5 Z" fill="#000" stroke="none" stroke-width="1"/><path d="M691 582.7 H693 V584.5 H691 Z" fill="#eee" stroke="none" stroke-width="1"/><path d="M694 582.7 H700 V584.5 H694 Z" fill="#fff" stroke="none" stroke-width="1"/><path d="M701 582.7 H706.5 V584.5 H701 Z" fill="#000" stroke="none" stroke-width="1"/><path d="M708 582.7 H711 V584.5 H708 Z" fill="#888" stroke="none" stroke-width="1"/><path d="M712 582.7 H714 V584.5 H712 Z" fill="#fff" stroke="none" stroke-width="1"/><path d="M715 582.7 H716.5 V584.5 H715 Z" fill="#333" stroke="none" stroke-width="1"/><path d="M718 582.7 H723.5 V584.5 H718 Z" fill="#fff" stroke="none" stroke-width="1"/><path d="M670.8 587.6 H725.2 Q725.8 587.6 725.8 588.3 V590.9 Q725.8 591.6 725.2 591.6 H670.8 Q670.2 591.6 670.2 590.9 V588.3 Q670.2 587.6 670.8 587.6 Z" fill="#cfccc8" stroke="#111" stroke-width="1"/><path d="M672 588.7 H675 V590.5 H672 Z" fill="#999" stroke="none" stroke-width="1"/><path d="M675.5 588.7 H678 V590.5 H675.5 Z" fill="#eee" stroke="none" stroke-width="1"/><path d="M679 588.7 H681 V590.5 H679 Z" fill="#fff" stroke="none" stroke-width="1"/><path d="M682.5 588.7 H689.5 V590.5 H682.5 Z" fill="#000" stroke="none" stroke-width="1"/><path d="M691 588.7 H693 V590.5 H691 Z" fill="#eee" stroke="none" stroke-width="1"/><path d="M694 588.7 H700 V590.5 H694 Z" fill="#fff" stroke="none" stroke-width="1"/><path d="M701 588.7 H706.5 V590.5 H701 Z" fill="#000" stroke="none" stroke-width="1"/><path d="M708 588.7 H711 V590.5 H708 Z" fill="#888" stroke="none" stroke-width="1"/><path d="M712 588.7 H714 V590.5 H712 Z" fill="#fff" stroke="none" stroke-width="1"/><path d="M715 588.7 H716.5 V590.5 H715 Z" fill="#333" stroke="none" stroke-width="1"/><path d="M718 588.7 H723.5 V590.5 H718 Z" fill="#fff" stroke="none" stroke-width="1"/><path d="M670.8 593.6 H725.2 Q725.8 593.6 725.8 594.3 V596.9 Q725.8 597.6 725.2 597.6 H670.8 Q670.2 597.6 670.2 596.9 V594.3 Q670.2 593.6 670.8 593.6 Z" fill="#cfccc8" stroke="#111" stroke-width="1"/><path d="M672 594.7 H675 V596.5 H672 Z" fill="#999" stroke="none" stroke-width="1"/><path d="M675.5 594.7 H678 V596.5 H675.5 Z" fill="#eee" stroke="none" stroke-width="1"/><path d="M679 594.7 H681 V596.5 H679 Z" fill="#fff" stroke="none" stroke-width="1"/><path d="M682.5 594.7 H689.5 V596.5 H682.5 Z" fill="#000" stroke="none" stroke-width="1"/><path d="M691 594.7 H693 V596.5 H691 Z" fill="#eee" stroke="none" stroke-width="1"/><path d="M694 594.7 H700 V596.5 H694 Z" fill="#fff" stroke="none" stroke-width="1"/><path d="M701 594.7 H706.5 V596.5 H701 Z" fill="#000" stroke="none" stroke-width="1"/><path d="M708 594.7 H711 V596.5 H708 Z" fill="#888" stroke="none" stroke-width="1"/><path d="M712 594.7 H714 V596.5 H712 Z" fill="#fff" stroke="none" stroke-width="1"/><path d="M715 594.7 H716.5 V596.5 H715 Z" fill="#333" stroke="none" stroke-width="1"/><path d="M718 594.7 H723.5 V596.5 H718 Z" fill="#fff" stroke="none" stroke-width="1"/><path d="M670.8 599.6 H725.2 Q725.8 599.6 725.8 600.3 V602.9 Q725.8 603.6 725.2 603.6 H670.8 Q670.2 603.6 670.2 602.9 V600.3 Q670.2 599.6 670.8 599.6 Z" fill="#cfccc8" stroke="#111" stroke-width="1"/><path d="M672 600.7 H675 V602.5 H672 Z" fill="#999" stroke="none" stroke-width="1"/><path d="M675.5 600.7 H678 V602.5 H675.5 Z" fill="#eee" stroke="none" stroke-width="1"/><path d="M679 600.7 H681 V602.5 H679 Z" fill="#fff" stroke="none" stroke-width="1"/><path d="M682.5 600.7 H689.5 V602.5 H682.5 Z" fill="#000" stroke="none" stroke-width="1"/><path d="M691 600.7 H693 V602.5 H691 Z" fill="#eee" stroke="none" stroke-width="1"/><path d="M694 600.7 H700 V602.5 H694 Z" fill="#fff" stroke="none" stroke-width="1"/><path d="M701 600.7 H706.5 V602.5 H701 Z" fill="#000" stroke="none" stroke-width="1"/><path d="M708 600.7 H711 V602.5 H708 Z" fill="#888" stroke="none" stroke-width="1"/><path d="M712 600.7 H714 V602.5 H712 Z" fill="#fff" stroke="none" stroke-width="1"/><path d="M715 600.7 H716.5 V602.5 H715 Z" fill="#333" stroke="none" stroke-width="1"/><path d="M718 600.7 H723.5 V602.5 H718 Z" fill="#fff" stroke="none" stroke-width="1"/><path d="M670.8 605.6 H725.2 Q725.8 605.6 725.8 606.3 V608.9 Q725.8 609.6 725.2 609.6 H670.8 Q670.2 609.6 670.2 608.9 V606.3 Q670.2 605.6 670.8 605.6 Z" fill="#cfccc8" stroke="#111" stroke-width="1"/><path d="M672 606.7 H675 V608.5 H672 Z" fill="#999" stroke="none" stroke-width="1"/><path d="M675.5 606.7 H678 V608.5 H675.5 Z" fill="#eee" stroke="none" stroke-width="1"/><path d="M679 606.7 H681 V608.5 H679 Z" fill="#fff" stroke="none" stroke-width="1"/><path d="M682.5 606.7 H689.5 V608.5 H682.5 Z" fill="#000" stroke="none" stroke-width="1"/><path d="M691 606.7 H693 V608.5 H691 Z" fill="#eee" stroke="none" stroke-width="1"/><path d="M694 606.7 H700 V608.5 H694 Z" fill="#fff" stroke="none" stroke-width="1"/><path d="M701 606.7 H706.5 V608.5 H701 Z" fill="#000" stroke="none" stroke-width="1"/><path d="M708 606.7 H711 V608.5 H708 Z" fill="#888" stroke="none" stroke-width="1"/><path d="M712 606.7 H714 V608.5 H712 Z" fill="#fff" stroke="none" stroke-width="1"/><path d="M715 606.7 H716.5 V608.5 H715 Z" fill="#333" stroke="none" stroke-width="1"/><path d="M718 606.7 H723.5 V608.5 H718 Z" fill="#fff" stroke="none" stroke-width="1"/><path d="M681.7 551 V611 M686.4 551 V611 M704.5 551 V611 M708.4 551 V611" stroke="#222" stroke-width="0.9" fill="none"/><rect x="800.3" y="158.3" width="15.4" height="14.6" fill="#e9e6e1" stroke="#222" stroke-width="1.1"/><path d="M800.3 158.3 L805.0999999999999 162.60000000000002 M815.6999999999999 158.3 L810.9 162.60000000000002 M800.3 172.9 L805.0999999999999 168.60000000000002 M815.6999999999999 172.9 L810.9 168.60000000000002" stroke="#444" stroke-width="0.8"/><rect x="805.0999999999999" y="162.60000000000002" width="5.8" height="6" fill="none" stroke="#333" stroke-width="0.9"/><rect x="806.5" y="153.3" width="3.3" height="17.3" rx="1.6" fill="#aaa" stroke="#333" stroke-width="0.9"/><rect x="851.9" y="265.2" width="15.4" height="14.6" fill="#e9e6e1" stroke="#222" stroke-width="1.1"/><path d="M851.9 265.2 L856.6999999999999 269.5 M867.3 265.2 L862.5 269.5 M851.9 279.8 L856.6999999999999 275.5 M867.3 279.8 L862.5 275.5" stroke="#444" stroke-width="0.8"/><rect x="856.6999999999999" y="269.5" width="5.8" height="6" fill="none" stroke="#333" stroke-width="0.9"/><rect x="854.9" y="271.7" width="16.6" height="2.9" rx="1.4" fill="#aaa" stroke="#333" stroke-width="0.9"/><rect x="851.9" y="407.5" width="15.4" height="14.6" fill="#e9e6e1" stroke="#222" stroke-width="1.1"/><path d="M851.9 407.5 L856.6999999999999 411.8 M867.3 407.5 L862.5 411.8 M851.9 422.1 L856.6999999999999 417.8 M867.3 422.1 L862.5 417.8" stroke="#444" stroke-width="0.8"/><rect x="856.6999999999999" y="411.8" width="5.8" height="6" fill="none" stroke="#333" stroke-width="0.9"/><rect x="854.9" y="414.0" width="16.6" height="2.9" rx="1.4" fill="#aaa" stroke="#333" stroke-width="0.9"/><path d="M909.1 211.2 L912.1 213.7 Q920.1 220.2 928.1 213.7 L931.2 211.2" fill="#e9e6e1" stroke="#222" stroke-width="1.1"/><path d="M917.1 215.0 L920.1 213.0 L923.1 215.0 Z" fill="#333" stroke="none" stroke-width="1"/><path d="M908.6 181 H931.7 V211.2 H908.6 Z" fill="#e9e6e1" stroke="#222" stroke-width="1.2"/><path d="M908.6 181 H916.2 V211.2 H908.6 Z" fill="#efede9" stroke="#111" stroke-width="1.4"/><path d="M924.4 181 H931.7 V211.2 H924.4 Z" fill="#efede9" stroke="#111" stroke-width="1.4"/><path d="M908.6 184.5 H916.2 M924.4 184.5 H931.7 M908.6 209.2 H931.7" stroke="#333" stroke-width="1.4" fill="none"/><path d="M910.1 181.8 H914.6 V183.8 H910.1 Z" fill="#888" stroke="none" stroke-width="1"/><path d="M925.9 181.8 H930.2 V183.8 H925.9 Z" fill="#888" stroke="none" stroke-width="1"/><path d="M917.6 191 Q920.2 189 922.9 191 V202.5 Q920.2 204.5 917.6 202.5 Z" fill="#e9e6e1" stroke="#333" stroke-width="1"/><path d="M918.1 183.5 H922.3000000000001 M918.1 187.5 H922.3000000000001 M918.1 206 H922.3000000000001" stroke="#444" stroke-width="1.4" fill="none"/><rect x="909.2" y="196.1" width="1.8" height="1.8" fill="#111"/><rect x="913.5" y="196.1" width="1.8" height="1.8" fill="#111"/><rect x="924.9000000000001" y="196.1" width="1.8" height="1.8" fill="#111"/><rect x="929.2" y="196.1" width="1.8" height="1.8" fill="#111"/><path d="M1049.1 186.10000000000002 L1052.1 183.60000000000002 Q1060.1 178.10000000000002 1068.1 183.60000000000002 L1071.1999999999998 186.10000000000002" fill="#e9e6e1" stroke="#222" stroke-width="1.1"/><path d="M1048.6 186.10000000000002 H1071.6999999999998 V217.10000000000002 H1048.6 Z" fill="#e9e6e1" stroke="#222" stroke-width="1.2"/><path d="M1048.6 186.10000000000002 H1056.1999999999998 V217.10000000000002 H1048.6 Z" fill="#efede9" stroke="#111" stroke-width="1.4"/><path d="M1064.3999999999999 186.10000000000002 H1071.6999999999998 V217.10000000000002 H1064.3999999999999 Z" fill="#efede9" stroke="#111" stroke-width="1.4"/><path d="M1048.6 189.60000000000002 H1056.1999999999998 M1064.3999999999999 189.60000000000002 H1071.6999999999998 M1048.6 215.10000000000002 H1071.6999999999998" stroke="#333" stroke-width="1.4" fill="none"/><path d="M1050.1 186.90000000000003 H1054.6 V188.90000000000003 H1050.1 Z" fill="#888" stroke="none" stroke-width="1"/><path d="M1065.8999999999999 186.90000000000003 H1070.1999999999998 V188.90000000000003 H1065.8999999999999 Z" fill="#888" stroke="none" stroke-width="1"/><path d="M1057.6 196.10000000000002 Q1060.1999999999998 194.10000000000002 1062.8999999999999 196.10000000000002 V207.60000000000002 Q1060.1999999999998 209.60000000000002 1057.6 207.60000000000002 Z" fill="#e9e6e1" stroke="#333" stroke-width="1"/><path d="M1058.1 188.60000000000002 H1062.3 M1058.1 192.60000000000002 H1062.3 M1058.1 211.10000000000002 H1062.3" stroke="#444" stroke-width="1.4" fill="none"/><rect x="1049.1999999999998" y="201.2" width="1.8" height="1.8" fill="#111"/><rect x="1053.4999999999998" y="201.2" width="1.8" height="1.8" fill="#111"/><rect x="1064.8999999999999" y="201.2" width="1.8" height="1.8" fill="#111"/><rect x="1069.1999999999998" y="201.2" width="1.8" height="1.8" fill="#111"/><path d="M1175.5 210.0 L1178.5 212.5 Q1186.5 219.0 1194.5 212.5 L1197.6 210.0" fill="#e9e6e1" stroke="#222" stroke-width="1.1"/><path d="M1183.5 213.8 L1186.5 211.8 L1189.5 213.8 Z" fill="#333" stroke="none" stroke-width="1"/><path d="M1175 179.8 H1198.1 V210.0 H1175 Z" fill="#e9e6e1" stroke="#222" stroke-width="1.2"/><path d="M1175 179.8 H1182.6 V210.0 H1175 Z" fill="#efede9" stroke="#111" stroke-width="1.4"/><path d="M1190.8 179.8 H1198.1 V210.0 H1190.8 Z" fill="#efede9" stroke="#111" stroke-width="1.4"/><path d="M1175 183.3 H1182.6 M1190.8 183.3 H1198.1 M1175 208.0 H1198.1" stroke="#333" stroke-width="1.4" fill="none"/><path d="M1176.5 180.60000000000002 H1181 V182.60000000000002 H1176.5 Z" fill="#888" stroke="none" stroke-width="1"/><path d="M1192.3 180.60000000000002 H1196.6 V182.60000000000002 H1192.3 Z" fill="#888" stroke="none" stroke-width="1"/><path d="M1184 189.8 Q1186.6 187.8 1189.3 189.8 V201.3 Q1186.6 203.3 1184 201.3 Z" fill="#e9e6e1" stroke="#333" stroke-width="1"/><path d="M1184.5 182.3 H1188.7 M1184.5 186.3 H1188.7 M1184.5 204.8 H1188.7" stroke="#444" stroke-width="1.4" fill="none"/><rect x="1175.6" y="194.9" width="1.8" height="1.8" fill="#111"/><rect x="1179.8999999999999" y="194.9" width="1.8" height="1.8" fill="#111"/><rect x="1191.3" y="194.9" width="1.8" height="1.8" fill="#111"/><rect x="1195.6" y="194.9" width="1.8" height="1.8" fill="#111"/><path d="M1048.6 264.4 Q1042.1 267.4 1042.6 273.4 Q1043.1 279.4 1048.6 282.4 M1059.1 264.4 Q1065.6 267.4 1065.3999999999999 273.4 Q1065.1 279.4 1059.1 282.4" stroke="#222" stroke-width="1.5" stroke-dasharray="2 0.6" fill="none"/><path d="M1043.1 269.9 H1046.1 V276.9 H1043.1" fill="none" stroke="#222" stroke-width="1.2"/><path d="M1064.6 269.9 H1061.6 V276.9 H1064.6" fill="none" stroke="#222" stroke-width="1.2"/><path d="M1049.1 259.4 Q1049.1 257.4 1051.1 257.4 H1056.6 Q1058.6 257.4 1058.6 259.4 V286.9 Q1058.6 288.9 1056.6 288.9 H1051.1 Q1049.1 288.9 1049.1 286.9 Z" fill="#f1efeb" stroke="#111" stroke-width="1.3"/><path d="M1049.1 260.9 H1058.6 M1049.1 285.4 H1058.6" stroke="#333" stroke-width="2" fill="none"/><rect x="1050.8" y="272.7" width="1.8" height="1.8" fill="#111"/><rect x="1055.1" y="272.7" width="1.8" height="1.8" fill="#111"/><path d="M915.4 343 Q911.9 345 911.9 347 M911.9 353 Q911.9 355 915.4 357 M924.6 343 Q928.1 345 928.1 347 M928.1 353 Q928.1 355 924.6 357" stroke="#555" stroke-width="0.7" fill="none"/><path d="M911.9 346 H908.4 V348 H909.9 V351.5 H908.4 V353.5 H911.9 Z" fill="#e9e6e1" stroke="#222" stroke-width="1.1"/><path d="M928.1 346 H931.8 V353.5 H928.1 Z" fill="#e9e6e1" stroke="#222" stroke-width="1.1"/><path d="M929.4 348 V351.5" stroke="#333" stroke-width="1" fill="none"/><path d="M915.4 336.5 Q915.4 335 916.9 335 H923.1 Q924.6 335 924.6 336.5 V365.4 H915.4 Z" fill="#f1efeb" stroke="#111" stroke-width="1.3"/><path d="M915.4 362.5 H924.6" stroke="#222" stroke-width="1" fill="none"/><path d="M916.9 364 H923.1" stroke="#777" stroke-width="1.2" fill="none"/><rect x="917.0" y="349.5" width="1.8" height="1.8" fill="#111"/><rect x="921.1999999999999" y="349.5" width="1.8" height="1.8" fill="#111"/><path d="M915.4 419 Q911.9 421 911.9 423 M911.9 429 Q911.9 431 915.4 433 M924.6 419 Q928.1 421 928.1 423 M928.1 429 Q928.1 431 924.6 433" stroke="#555" stroke-width="0.7" fill="none"/><path d="M911.9 422 H908.4 V424 H909.9 V427.5 H908.4 V429.5 H911.9 Z" fill="#e9e6e1" stroke="#222" stroke-width="1.1"/><path d="M928.1 422 H931.8 V429.5 H928.1 Z" fill="#e9e6e1" stroke="#222" stroke-width="1.1"/><path d="M929.4 424 V427.5" stroke="#333" stroke-width="1" fill="none"/><path d="M915.4 412.5 Q915.4 411 916.9 411 H923.1 Q924.6 411 924.6 412.5 V441.4 H915.4 Z" fill="#f1efeb" stroke="#111" stroke-width="1.3"/><path d="M915.4 438.5 H924.6" stroke="#222" stroke-width="1" fill="none"/><path d="M916.9 440 H923.1" stroke="#777" stroke-width="1.2" fill="none"/><rect x="917.0" y="425.5" width="1.8" height="1.8" fill="#111"/><rect x="921.1999999999999" y="425.5" width="1.8" height="1.8" fill="#111"/><path d="M1049.1 343 Q1045.6 345 1045.6 347 M1045.6 353 Q1045.6 355 1049.1 357 M1058.3 343 Q1061.8 345 1061.8 347 M1061.8 353 Q1061.8 355 1058.3 357" stroke="#555" stroke-width="0.7" fill="none"/><path d="M1045.6 346 H1042.1 V348 H1043.6 V351.5 H1042.1 V353.5 H1045.6 Z" fill="#e9e6e1" stroke="#222" stroke-width="1.1"/><path d="M1061.8 346 H1065.5 V353.5 H1061.8 Z" fill="#e9e6e1" stroke="#222" stroke-width="1.1"/><path d="M1063.1 348 V351.5" stroke="#333" stroke-width="1" fill="none"/><path d="M1049.1 336.5 Q1049.1 335 1050.6 335 H1056.8 Q1058.3 335 1058.3 336.5 V365.4 H1049.1 Z" fill="#f1efeb" stroke="#111" stroke-width="1.3"/><path d="M1049.1 362.5 H1058.3" stroke="#222" stroke-width="1" fill="none"/><path d="M1050.6 364 H1056.8" stroke="#777" stroke-width="1.2" fill="none"/><rect x="1050.6999999999998" y="349.5" width="1.8" height="1.8" fill="#111"/><rect x="1054.8999999999999" y="349.5" width="1.8" height="1.8" fill="#111"/><path d="M1049.1 419 Q1045.6 421 1045.6 423 M1045.6 429 Q1045.6 431 1049.1 433 M1058.3 419 Q1061.8 421 1061.8 423 M1061.8 429 Q1061.8 431 1058.3 433" stroke="#555" stroke-width="0.7" fill="none"/><path d="M1045.6 422 H1042.1 V424 H1043.6 V427.5 H1042.1 V429.5 H1045.6 Z" fill="#e9e6e1" stroke="#222" stroke-width="1.1"/><path d="M1061.8 422 H1065.5 V429.5 H1061.8 Z" fill="#e9e6e1" stroke="#222" stroke-width="1.1"/><path d="M1063.1 424 V427.5" stroke="#333" stroke-width="1" fill="none"/><path d="M1049.1 412.5 Q1049.1 411 1050.6 411 H1056.8 Q1058.3 411 1058.3 412.5 V441.4 H1049.1 Z" fill="#f1efeb" stroke="#111" stroke-width="1.3"/><path d="M1049.1 438.5 H1058.3" stroke="#222" stroke-width="1" fill="none"/><path d="M1050.6 440 H1056.8" stroke="#777" stroke-width="1.2" fill="none"/><rect x="1050.6999999999998" y="425.5" width="1.8" height="1.8" fill="#111"/><rect x="1054.8999999999999" y="425.5" width="1.8" height="1.8" fill="#111"/><path d="M1182.2 343 Q1178.7 345 1178.7 347 M1178.7 353 Q1178.7 355 1182.2 357 M1191.4 343 Q1194.9 345 1194.9 347 M1194.9 353 Q1194.9 355 1191.4 357" stroke="#555" stroke-width="0.7" fill="none"/><path d="M1178.7 346 H1175.2 V348 H1176.7 V351.5 H1175.2 V353.5 H1178.7 Z" fill="#e9e6e1" stroke="#222" stroke-width="1.1"/><path d="M1194.9 346 H1198.6000000000001 V353.5 H1194.9 Z" fill="#e9e6e1" stroke="#222" stroke-width="1.1"/><path d="M1196.2 348 V351.5" stroke="#333" stroke-width="1" fill="none"/><path d="M1182.2 336.5 Q1182.2 335 1183.7 335 H1189.9 Q1191.4 335 1191.4 336.5 V365.4 H1182.2 Z" fill="#f1efeb" stroke="#111" stroke-width="1.3"/><path d="M1182.2 362.5 H1191.4" stroke="#222" stroke-width="1" fill="none"/><path d="M1183.7 364 H1189.9" stroke="#777" stroke-width="1.2" fill="none"/><rect x="1183.8" y="349.5" width="1.8" height="1.8" fill="#111"/><rect x="1188.0" y="349.5" width="1.8" height="1.8" fill="#111"/><path d="M1182.2 419 Q1178.7 421 1178.7 423 M1178.7 429 Q1178.7 431 1182.2 433 M1191.4 419 Q1194.9 421 1194.9 423 M1194.9 429 Q1194.9 431 1191.4 433" stroke="#555" stroke-width="0.7" fill="none"/><path d="M1178.7 422 H1175.2 V424 H1176.7 V427.5 H1175.2 V429.5 H1178.7 Z" fill="#e9e6e1" stroke="#222" stroke-width="1.1"/><path d="M1194.9 422 H1198.6000000000001 V429.5 H1194.9 Z" fill="#e9e6e1" stroke="#222" stroke-width="1.1"/><path d="M1196.2 424 V427.5" stroke="#333" stroke-width="1" fill="none"/><path d="M1182.2 412.5 Q1182.2 411 1183.7 411 H1189.9 Q1191.4 411 1191.4 412.5 V441.4 H1182.2 Z" fill="#f1efeb" stroke="#111" stroke-width="1.3"/><path d="M1182.2 438.5 H1191.4" stroke="#222" stroke-width="1" fill="none"/><path d="M1183.7 440 H1189.9" stroke="#777" stroke-width="1.2" fill="none"/><rect x="1183.8" y="425.5" width="1.8" height="1.8" fill="#111"/><rect x="1188.0" y="425.5" width="1.8" height="1.8" fill="#111"/></svg>
</body></html>
